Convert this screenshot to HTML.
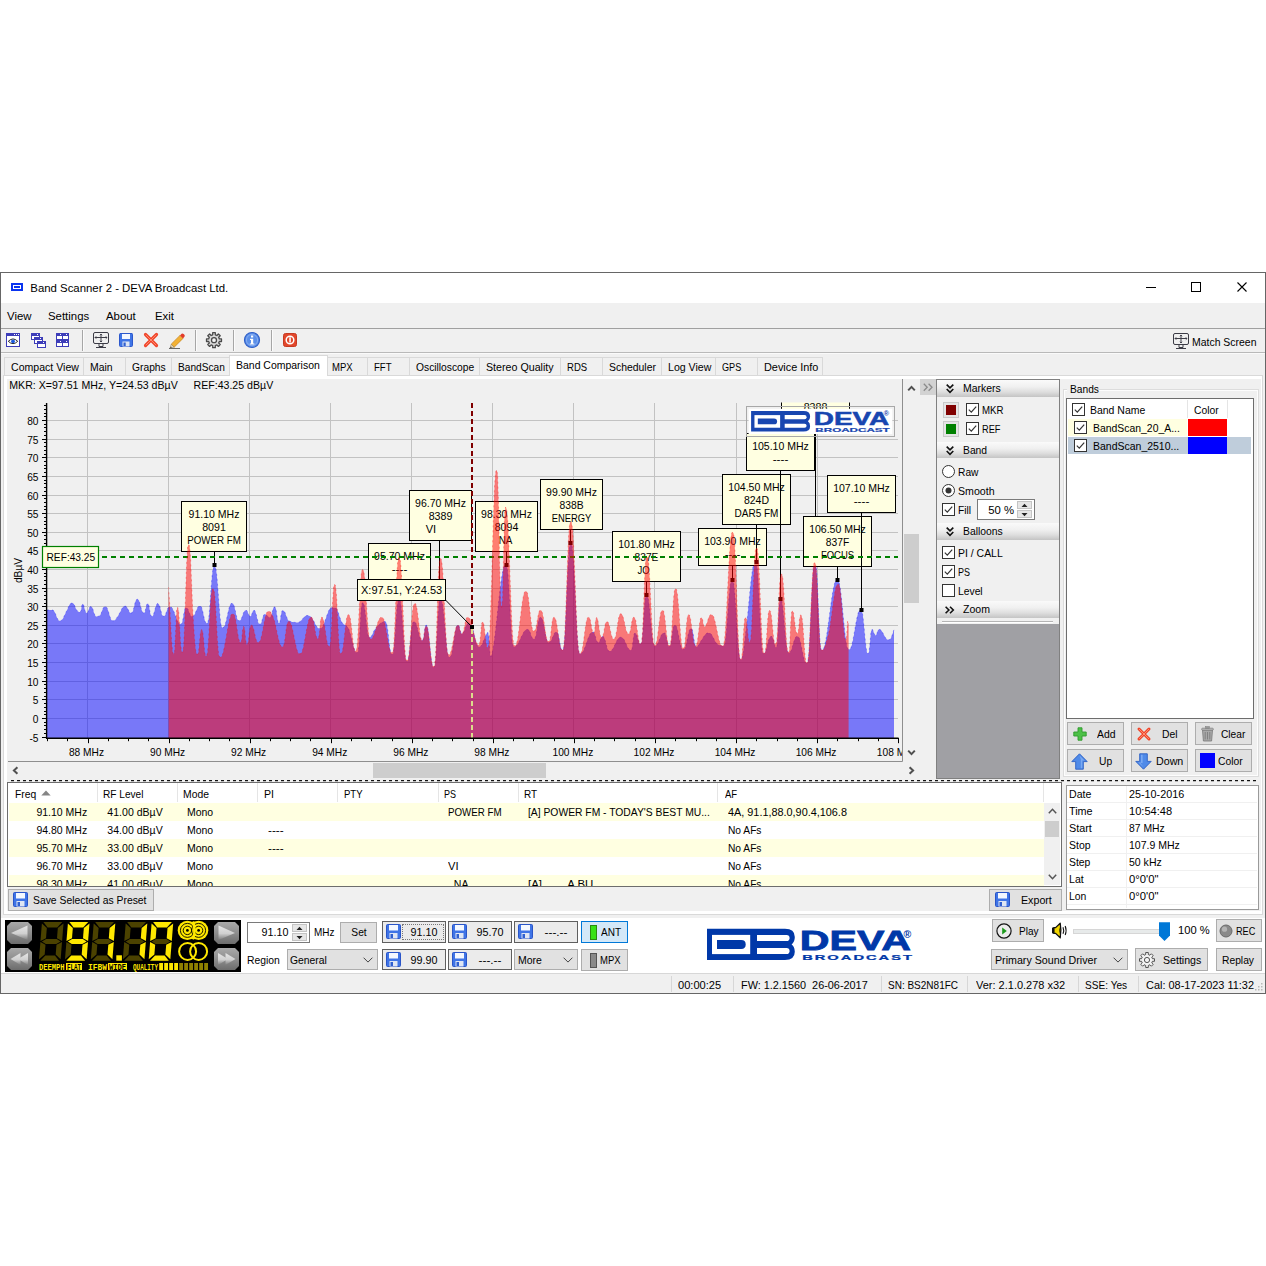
<!DOCTYPE html>
<html><head><meta charset="utf-8"><title>Band Scanner 2 - DEVA Broadcast Ltd.</title>
<style>
html,body{margin:0;padding:0;background:#fff;}
body{width:1266px;height:1266px;position:relative;overflow:hidden;font-family:"Liberation Sans",sans-serif;color:#000;}
body div{position:absolute;box-sizing:content-box;}
.t{white-space:nowrap;font-size:11px;line-height:14px;color:#000;}
svg{position:absolute;overflow:visible}
svg text{font-family:"Liberation Sans",sans-serif;}
.hdr{background:linear-gradient(#fafafa,#f0f0f0 40%,#dedede 70%,#c4c4c4);}
</style></head><body>

<div style="left:0px;top:272px;width:1264px;height:720px;border:1px solid #666;background:#f0f0f0"></div>
<div style="left:1px;top:273px;width:1264px;height:30px;background:#fff"></div>
<div style="left:11px;top:283px;width:12px;height:8px;background:#0a34f0"></div>
<div style="left:13px;top:285px;width:6px;height:2px;border:1px solid #fff;background:#0a34f0"></div>
<div class="t" style="left:30.3px;top:279.5px;font-size:11.4px;line-height:16px;letter-spacing:0">Band Scanner 2 - DEVA Broadcast Ltd.</div>
<svg style="left:1140px;top:277px" width="120" height="22" viewBox="1140 277 120 22"><path d="M1146 287.5H1156" stroke="#000" stroke-width="1"/><rect x="1191.5" y="282.5" width="9" height="9" fill="none" stroke="#000"/><path d="M1237.5 282.5L1246.5 291.5M1246.5 282.5L1237.5 291.5" stroke="#000" stroke-width="1.1"/></svg>
<div style="left:1px;top:303px;width:1264px;height:25px;background:#f0f0f0"></div>
<div class="t" style="left:7px;top:307.5px;font-size:11.4px;line-height:16px;letter-spacing:0">View</div>
<div class="t" style="left:48px;top:307.5px;font-size:11.4px;line-height:16px;letter-spacing:0">Settings</div>
<div class="t" style="left:106px;top:307.5px;font-size:11.4px;line-height:16px;letter-spacing:0">About</div>
<div class="t" style="left:155px;top:307.5px;font-size:11.4px;line-height:16px;letter-spacing:0">Exit</div>
<div style="left:1px;top:328px;width:1264px;height:1px;background:#a0a0a0"></div>
<div style="left:1px;top:352px;width:1264px;height:1px;background:#b9b9b9"></div>
<div style="left:1px;top:353px;width:1264px;height:1px;background:#fafafa"></div>
<div style="left:82px;top:330px;width:1px;height:21px;background:#a6a6a6"></div>
<div style="left:83px;top:330px;width:1px;height:21px;background:#fbfbfb"></div>
<div style="left:195px;top:330px;width:1px;height:21px;background:#a6a6a6"></div>
<div style="left:196px;top:330px;width:1px;height:21px;background:#fbfbfb"></div>
<div style="left:233px;top:330px;width:1px;height:21px;background:#a6a6a6"></div>
<div style="left:234px;top:330px;width:1px;height:21px;background:#fbfbfb"></div>
<div style="left:271px;top:330px;width:1px;height:21px;background:#a6a6a6"></div>
<div style="left:272px;top:330px;width:1px;height:21px;background:#fbfbfb"></div>
<svg style="left:0;top:328px" width="320" height="26" viewBox="0 328 320 26">
<rect x="6.5" y="333.5" width="13" height="13" fill="#fff" stroke="#3d3db9"/><rect x="6" y="333" width="14" height="3" fill="#3d3db9"/><rect x="14" y="334" width="1" height="1" fill="#fff"/><rect x="16" y="334" width="1" height="1" fill="#fff"/><rect x="18" y="334" width="1" height="1" fill="#fff"/>
<path d="M8.3 341.3 Q13 336.6 17.7 341.3 Q13 346 8.3 341.3Z" fill="#fff" stroke="#111" stroke-width="0.9"/><circle cx="13" cy="341.3" r="1.9" fill="#1d5be0"/>
<rect x="31.5" y="333.5" width="8" height="6" fill="#fff" stroke="#3d3db9"/><rect x="31" y="333" width="9" height="3" fill="#3d3db9"/><rect x="37" y="334" width="1" height="1" fill="#fff"/>
<rect x="34.5" y="337.5" width="8" height="6" fill="#fff" stroke="#3d3db9"/><rect x="34" y="337" width="9" height="3" fill="#3d3db9"/><rect x="40" y="338" width="1" height="1" fill="#fff"/>
<rect x="37.5" y="341.5" width="8" height="6" fill="#fff" stroke="#3d3db9"/><rect x="37" y="341" width="9" height="3" fill="#3d3db9"/><rect x="43" y="342" width="1" height="1" fill="#fff"/>
<rect x="56" y="333" width="13" height="14" fill="#3d3db9"/>
<rect x="57" y="336" width="5" height="3" fill="#fff"/>
<rect x="63" y="336" width="5" height="3" fill="#fff"/>
<rect x="57" y="343" width="5" height="3" fill="#fff"/>
<rect x="63" y="343" width="5" height="3" fill="#fff"/>
<rect x="60" y="334" width="1" height="1" fill="#fff"/><rect x="66" y="334" width="1" height="1" fill="#fff"/><rect x="60" y="341" width="1" height="1" fill="#fff"/><rect x="66" y="341" width="1" height="1" fill="#fff"/>
<g transform="translate(93,332)" fill="none" stroke="#3c3c46" stroke-width="1"><rect x="0.5" y="0.5" width="15" height="11" rx="1.5"/><path d="M8 2V10M2 5.5H14" /><path d="M6.8 3.2L8 2L9.2 3.2M6.8 8.8L8 10L9.2 8.8M3.2 4.3L2 5.5L3.2 6.7M12.8 4.3L14 5.5L12.8 6.7" stroke-width="0.9"/><path d="M6 12V14.5H10V12M3 15.5H13" /></g>
<path d="M120 333.5H132Q132.5 333.5 132.5 334.5V345.5Q132.5 346.5 131.5 346.5H120.5Q119.5 346.5 119.5 345.5V334.5Q119.5 333.5 120.5 333.5Z" fill="#3f74e6" stroke="#2c58cc"/><rect x="122" y="334" width="8" height="5" fill="#f3f7ff"/><rect x="122.5" y="341.5" width="7" height="5" fill="#dde5f4"/><rect x="123.5" y="342.5" width="2.2" height="3.5" fill="#2f5fd0"/>
<path d="M145.5 334.5L156.5 345.5M156.5 334.5L145.5 345.5" stroke="#f0452a" stroke-width="3.2" stroke-linecap="round"/><path d="M146 335L156 345M156 335L146 345" stroke="#ff8a6e" stroke-width="1" stroke-linecap="round"/>
<path d="M171.2 344.2L180 335.4L183 338.4L174.2 347.2Z" fill="#f2b134" stroke="#c4821c" stroke-width="0.7"/><path d="M180 335.4L181.6 333.8Q182.6 333 183.6 334L184.4 334.8Q185.2 335.8 184.4 336.8L183 338.4Z" fill="#e23c2a"/><path d="M171.2 344.2L170 348.2L174.2 347.2Z" fill="#e8d9b8" stroke="#8a7a5a" stroke-width="0.5"/><path d="M170 348.2L171 346.6L171.8 347.6Z" fill="#333"/><path d="M169 348.5H180" stroke="#666" stroke-width="1"/>
<path d="M221.49 338.89 L221.49 341.51 L219.35 341.48 L218.69 343.07 L220.22 344.57 L218.37 346.42 L216.87 344.89 L215.28 345.55 L215.31 347.69 L212.69 347.69 L212.72 345.55 L211.13 344.89 L209.63 346.42 L207.78 344.57 L209.31 343.07 L208.65 341.48 L206.51 341.51 L206.51 338.89 L208.65 338.92 L209.31 337.33 L207.78 335.83 L209.63 333.98 L211.13 335.51 L212.72 334.85 L212.69 332.71 L215.31 332.71 L215.28 334.85 L216.87 335.51 L218.37 333.98 L220.22 335.83 L218.69 337.33 L219.35 338.92Z" fill="#d9d9d9" stroke="#4a4a4a" stroke-width="1.3" stroke-linejoin="round"/><circle cx="214" cy="340.2" r="2.5" fill="#f4f4f4" stroke="#4a4a4a" stroke-width="1.3"/>
<circle cx="252" cy="340" r="7.5" fill="#5b8fe8" stroke="#2f5fc8" stroke-width="1.2"/><circle cx="252" cy="340" r="5.6" fill="none" stroke="#8fb4f4" stroke-width="0.8"/><rect x="251" y="335.5" width="2.2" height="2" fill="#fff"/><path d="M250 338.8H253.2V343.4H254.4V344.6H249.8V343.4H251V340H250Z" fill="#fff"/>
<rect x="283.5" y="333.5" width="13" height="13" rx="2" fill="#e2472b" stroke="#c63a22"/><circle cx="290" cy="340" r="3.8" fill="none" stroke="#fff" stroke-width="1.5"/><rect x="289.3" y="337.3" width="1.5" height="5.2" fill="#fff"/>
</svg>
<svg style="left:1170px;top:330px" width="20" height="20" viewBox="1170 330 20 20"><g transform="translate(1173,333)" fill="none" stroke="#3c3c46" stroke-width="1"><rect x="0.5" y="0.5" width="15" height="11" rx="1.5"/><path d="M8 2V10M2 5.5H14" /><path d="M6.8 3.2L8 2L9.2 3.2M6.8 8.8L8 10L9.2 8.8M3.2 4.3L2 5.5L3.2 6.7M12.8 4.3L14 5.5L12.8 6.7" stroke-width="0.9"/><path d="M6 12V14.5H10V12M3 15.5H13" /></g></svg>
<div class="t" style="left:1192px;top:334.5px;font-size:11px;line-height:14px;transform-origin:0 50%;transform:scaleX(0.950);">Match Screen</div>
<div style="left:3px;top:375px;width:1258px;height:538px;border:1px solid #d9d9d9;background:#fff"></div>
<div style="left:7px;top:379px;width:1254px;height:532.3px;background:#f0f0f0"></div>
<div style="left:4px;top:357px;width:78px;height:17px;border:1px solid #d9d9d9;border-bottom:none;background:#f0f0f0"></div>
<div class="t" style="left:10.5px;top:360.0px;font-size:11px;line-height:14px;transform-origin:0 50%;transform:scaleX(0.960);">Compact View</div>
<div style="left:83px;top:357px;width:41px;height:17px;border:1px solid #d9d9d9;border-bottom:none;background:#f0f0f0"></div>
<div class="t" style="left:89.5px;top:360.0px;font-size:11px;line-height:14px;transform-origin:0 50%;transform:scaleX(0.947);">Main</div>
<div style="left:125px;top:357px;width:45px;height:17px;border:1px solid #d9d9d9;border-bottom:none;background:#f0f0f0"></div>
<div class="t" style="left:131.5px;top:360.0px;font-size:11px;line-height:14px;transform-origin:0 50%;transform:scaleX(0.934);">Graphs</div>
<div style="left:171px;top:357px;width:57px;height:17px;border:1px solid #d9d9d9;border-bottom:none;background:#f0f0f0"></div>
<div class="t" style="left:177.5px;top:360.0px;font-size:11px;line-height:14px;transform-origin:0 50%;transform:scaleX(0.923);">BandScan</div>
<div style="left:327px;top:357px;width:39px;height:17px;border:1px solid #d9d9d9;border-bottom:none;background:#f0f0f0"></div>
<div class="t" style="left:331.6px;top:360.0px;font-size:11px;line-height:14px;transform-origin:0 50%;transform:scaleX(0.865);">MPX</div>
<div style="left:367px;top:357px;width:41px;height:17px;border:1px solid #d9d9d9;border-bottom:none;background:#f0f0f0"></div>
<div class="t" style="left:373.5px;top:360.0px;font-size:11px;line-height:14px;transform-origin:0 50%;transform:scaleX(0.874);">FFT</div>
<div style="left:409px;top:357px;width:69px;height:17px;border:1px solid #d9d9d9;border-bottom:none;background:#f0f0f0"></div>
<div class="t" style="left:415.5px;top:360.0px;font-size:11px;line-height:14px;transform-origin:0 50%;transform:scaleX(0.934);">Oscilloscope</div>
<div style="left:479px;top:357px;width:80px;height:17px;border:1px solid #d9d9d9;border-bottom:none;background:#f0f0f0"></div>
<div class="t" style="left:485.5px;top:360.0px;font-size:11px;line-height:14px;transform-origin:0 50%;transform:scaleX(0.970);">Stereo Quality</div>
<div style="left:560px;top:357px;width:41px;height:17px;border:1px solid #d9d9d9;border-bottom:none;background:#f0f0f0"></div>
<div class="t" style="left:566.5px;top:360.0px;font-size:11px;line-height:14px;transform-origin:0 50%;transform:scaleX(0.866);">RDS</div>
<div style="left:602px;top:357px;width:58px;height:17px;border:1px solid #d9d9d9;border-bottom:none;background:#f0f0f0"></div>
<div class="t" style="left:608.5px;top:360.0px;font-size:11px;line-height:14px;transform-origin:0 50%;transform:scaleX(0.947);">Scheduler</div>
<div style="left:661px;top:357px;width:53px;height:17px;border:1px solid #d9d9d9;border-bottom:none;background:#f0f0f0"></div>
<div class="t" style="left:667.5px;top:360.0px;font-size:11px;line-height:14px;transform-origin:0 50%;transform:scaleX(0.962);">Log View</div>
<div style="left:715px;top:357px;width:41px;height:17px;border:1px solid #d9d9d9;border-bottom:none;background:#f0f0f0"></div>
<div class="t" style="left:721.5px;top:360.0px;font-size:11px;line-height:14px;transform-origin:0 50%;transform:scaleX(0.828);">GPS</div>
<div style="left:757px;top:357px;width:64px;height:17px;border:1px solid #d9d9d9;border-bottom:none;background:#f0f0f0"></div>
<div class="t" style="left:763.5px;top:360.0px;font-size:11px;line-height:14px;transform-origin:0 50%;transform:scaleX(0.989);">Device Info</div>
<div style="left:229px;top:355px;width:97px;height:20px;border:1px solid #d9d9d9;border-bottom:none;background:#fff"></div>
<div style="left:230px;top:375px;width:97px;height:2px;background:#fff"></div>
<div class="t" style="left:236px;top:358.0px;font-size:11px;line-height:14px;transform-origin:0 50%;transform:scaleX(0.952);">Band Comparison</div>
<div class="t" style="left:9.3px;top:379.2px;font-size:10.6px;line-height:13.6px;letter-spacing:0">MKR: X=97.51 MHz, Y=24.53 dB&micro;V</div>
<div class="t" style="left:193.5px;top:379.2px;font-size:10.6px;line-height:13.6px;letter-spacing:0">REF:43.25 dB&micro;V</div>
<svg style="left:0;top:376px" width="936" height="406" viewBox="0 376 936 406">
<defs><clipPath id="plot"><rect x="40" y="402.5" width="862" height="336"/></clipPath></defs>
<path d="M47 718.5H898M47 699.5H898M47 681.5H898M47 662.5H898M47 643.5H898M47 625.5H898M47 606.5H898M47 588.5H898M47 569.5H898M47 550.5H898M47 532.5H898M47 513.5H898M47 495.5H898M47 476.5H898M47 457.5H898M47 439.5H898M47 420.5H898M87.5 403V738M168.5 403V738M249.5 403V738M330.5 403V738M411.5 403V738M492.5 403V738M573.5 403V738M654.5 403V738M736.5 403V738M817.5 403V738" stroke="#c2c2c2" stroke-width="1" fill="none"/>
<path d="M47.0 738.0 L47.0 610.0 L48.0 610.0 L49.0 610.0 L50.0 610.0 L51.0 610.0 L52.0 610.0 L53.0 610.1 L54.0 611.0 L55.0 612.8 L56.0 615.3 L57.0 617.8 L58.0 619.7 L59.0 620.7 L60.0 620.8 L61.0 620.7 L62.0 620.0 L63.0 618.5 L64.0 616.4 L65.0 614.3 L66.0 612.2 L67.0 610.2 L68.0 608.0 L69.0 605.8 L70.0 604.1 L71.0 603.3 L72.0 603.1 L73.0 603.2 L74.0 604.3 L75.0 606.5 L76.0 608.9 L77.0 610.4 L78.0 611.4 L79.0 611.9 L80.0 612.1 L81.0 610.9 L82.0 604.6 L83.0 603.8 L84.0 606.2 L85.0 610.7 L86.0 612.7 L87.0 612.9 L88.0 611.8 L89.0 608.7 L90.0 606.8 L91.0 606.6 L92.0 607.1 L93.0 609.5 L94.0 612.9 L95.0 615.6 L96.0 616.4 L97.0 616.5 L98.0 616.4 L99.0 616.1 L100.0 615.4 L101.0 613.8 L102.0 611.1 L103.0 608.5 L104.0 606.9 L105.0 606.6 L106.0 606.7 L107.0 607.7 L108.0 610.2 L109.0 613.5 L110.0 616.8 L111.0 619.4 L112.0 620.6 L113.0 620.8 L114.0 620.7 L115.0 620.1 L116.0 618.9 L117.0 617.4 L118.0 615.9 L119.0 614.3 L120.0 612.4 L121.0 610.4 L122.0 608.5 L123.0 607.1 L124.0 606.3 L125.0 606.2 L126.0 606.3 L127.0 607.3 L128.0 609.2 L129.0 611.3 L130.0 612.7 L131.0 613.0 L132.0 612.8 L133.0 611.1 L134.0 607.3 L135.0 603.0 L136.0 600.0 L137.0 599.3 L138.0 599.4 L139.0 600.6 L140.0 603.7 L141.0 607.7 L142.0 611.1 L143.0 612.8 L144.0 613.0 L145.0 612.0 L146.0 607.3 L147.0 603.9 L148.0 603.6 L149.0 605.6 L150.0 612.5 L151.0 616.0 L152.0 616.4 L153.0 615.7 L154.0 613.0 L155.0 609.3 L156.0 605.7 L157.0 603.8 L158.0 603.5 L159.0 604.4 L160.0 607.0 L161.0 611.1 L162.0 615.0 L163.0 616.2 L164.0 616.3 L165.0 615.6 L166.0 613.2 L167.0 610.2 L168.0 607.8 L169.0 606.9 L170.0 606.8 L171.0 607.0 L172.0 607.8 L173.0 609.5 L174.0 611.8 L175.0 614.5 L176.0 617.3 L177.0 619.9 L178.0 622.1 L179.0 623.5 L180.0 624.1 L181.0 624.2 L182.0 623.3 L183.0 618.9 L184.0 612.5 L185.0 608.4 L186.0 607.7 L187.0 607.9 L188.0 609.2 L189.0 611.7 L190.0 614.4 L191.0 616.1 L192.0 616.4 L193.0 616.3 L194.0 615.5 L195.0 613.7 L196.0 611.3 L197.0 608.9 L198.0 607.0 L199.0 606.1 L200.0 606.0 L201.0 606.3 L202.0 608.4 L203.0 612.5 L204.0 617.3 L205.0 621.2 L206.0 623.1 L207.0 623.3 L208.0 622.3 L209.0 616.0 L210.0 604.0 L211.0 589.6 L212.0 576.5 L213.0 568.2 L214.0 566.2 L215.0 566.3 L216.0 569.1 L217.0 577.6 L218.0 590.2 L219.0 604.2 L220.0 616.7 L221.0 624.9 L222.0 627.4 L223.0 627.6 L224.0 627.1 L225.0 625.0 L226.0 621.4 L227.0 617.0 L228.0 612.5 L229.0 608.3 L230.0 605.2 L231.0 603.6 L232.0 603.4 L233.0 603.6 L234.0 605.4 L235.0 609.3 L236.0 614.0 L237.0 618.2 L238.0 620.4 L239.0 620.7 L240.0 620.6 L241.0 619.4 L242.0 617.1 L243.0 614.2 L244.0 611.7 L245.0 610.5 L246.0 610.3 L247.0 610.7 L248.0 612.8 L249.0 615.5 L250.0 616.3 L251.0 616.0 L252.0 613.7 L253.0 610.8 L254.0 610.3 L255.0 610.8 L256.0 613.5 L257.0 617.8 L258.0 621.9 L259.0 623.9 L260.0 624.2 L261.0 623.7 L262.0 620.7 L263.0 616.6 L264.0 614.6 L265.0 614.3 L266.0 614.5 L267.0 615.5 L268.0 616.7 L269.0 617.3 L270.0 617.4 L271.0 616.7 L272.0 613.3 L273.0 609.0 L274.0 607.1 L275.0 607.0 L276.0 609.0 L277.0 616.2 L278.0 622.3 L279.0 623.3 L280.0 622.0 L281.0 614.9 L282.0 610.8 L283.0 610.4 L284.0 610.9 L285.0 612.6 L286.0 615.3 L287.0 618.0 L288.0 620.0 L289.0 620.9 L290.0 621.3 L291.0 621.6 L292.0 621.9 L293.0 622.1 L294.0 622.3 L295.0 622.4 L296.0 622.5 L297.0 622.5 L298.0 622.4 L299.0 622.2 L300.0 621.6 L301.0 620.7 L302.0 619.6 L303.0 618.4 L304.0 617.3 L305.0 616.3 L306.0 615.7 L307.0 615.5 L308.0 615.5 L309.0 615.7 L310.0 616.2 L311.0 617.1 L312.0 618.3 L313.0 619.8 L314.0 621.6 L315.0 623.6 L316.0 625.5 L317.0 627.0 L318.0 628.1 L319.0 628.5 L320.0 628.5 L321.0 628.4 L322.0 627.6 L323.0 626.0 L324.0 623.7 L325.0 620.9 L326.0 618.0 L327.0 615.1 L328.0 612.4 L329.0 610.1 L330.0 608.5 L331.0 607.8 L332.0 607.7 L333.0 607.7 L334.0 607.7 L335.0 607.7 L336.0 608.1 L337.0 609.5 L338.0 611.8 L339.0 614.7 L340.0 617.8 L341.0 620.6 L342.0 622.6 L343.0 623.8 L344.0 624.5 L345.0 625.0 L346.0 625.6 L347.0 626.3 L348.0 627.4 L349.0 629.6 L350.0 632.7 L351.0 636.6 L352.0 640.7 L353.0 644.7 L354.0 648.3 L355.0 651.0 L356.0 652.5 L357.0 652.8 L358.0 652.0 L359.0 645.1 L360.0 627.3 L361.0 609.8 L362.0 603.2 L363.0 602.6 L364.0 604.2 L365.0 610.2 L366.0 619.2 L367.0 628.5 L368.0 635.0 L369.0 637.0 L370.0 637.2 L371.0 636.8 L372.0 635.2 L373.0 633.0 L374.0 630.8 L375.0 629.2 L376.0 627.9 L377.0 626.8 L378.0 625.6 L379.0 624.6 L380.0 623.7 L381.0 622.9 L382.0 622.3 L383.0 621.8 L384.0 621.6 L385.0 621.6 L386.0 622.0 L387.0 625.1 L388.0 632.2 L389.0 641.3 L390.0 649.3 L391.0 653.8 L392.0 654.6 L393.0 653.9 L394.0 648.3 L395.0 636.0 L396.0 620.7 L397.0 607.4 L398.0 600.2 L399.0 599.0 L400.0 599.7 L401.0 604.8 L402.0 615.9 L403.0 630.5 L404.0 645.0 L405.0 656.0 L406.0 660.9 L407.0 661.5 L408.0 660.7 L409.0 655.4 L410.0 645.7 L411.0 634.7 L412.0 626.0 L413.0 622.1 L414.0 621.6 L415.0 621.9 L416.0 623.5 L417.0 626.5 L418.0 630.4 L419.0 634.4 L420.0 637.8 L421.0 640.0 L422.0 640.6 L423.0 640.1 L424.0 635.6 L425.0 626.8 L426.0 625.1 L427.0 625.6 L428.0 629.4 L429.0 637.2 L430.0 647.2 L431.0 656.9 L432.0 664.2 L433.0 667.3 L434.0 667.5 L435.0 665.5 L436.0 654.6 L437.0 636.0 L438.0 616.5 L439.0 603.0 L440.0 599.4 L441.0 599.2 L442.0 601.1 L443.0 607.4 L444.0 617.1 L445.0 628.7 L446.0 640.1 L447.0 649.7 L448.0 655.5 L449.0 657.1 L450.0 657.1 L451.0 656.0 L452.0 652.4 L453.0 646.6 L454.0 639.9 L455.0 633.4 L456.0 628.3 L457.0 625.6 L458.0 625.1 L459.0 625.8 L460.0 630.0 L461.0 633.3 L462.0 633.7 L463.0 633.3 L464.0 631.6 L465.0 628.9 L466.0 626.1 L467.0 624.1 L468.0 623.4 L469.0 623.4 L470.0 623.7 L471.0 625.1 L472.0 627.1 L473.0 629.9 L474.0 633.7 L475.0 638.0 L476.0 642.1 L477.0 645.1 L478.0 646.6 L479.0 646.8 L480.0 646.7 L481.0 646.0 L482.0 644.4 L483.0 642.1 L484.0 639.6 L485.0 637.0 L486.0 634.7 L487.0 633.0 L488.0 632.5 L489.0 637.0 L490.0 654.6 L491.0 656.8 L492.0 653.8 L493.0 648.8 L494.0 642.3 L495.0 634.6 L496.0 626.0 L497.0 616.9 L498.0 607.6 L499.0 598.4 L500.0 589.7 L501.0 581.8 L502.0 575.1 L503.0 569.8 L504.0 566.4 L505.0 565.0 L506.0 564.8 L507.0 566.0 L508.0 573.9 L509.0 589.4 L510.0 608.7 L511.0 627.4 L512.0 640.9 L513.0 646.1 L514.0 646.8 L515.0 646.7 L516.0 646.1 L517.0 645.0 L518.0 643.5 L519.0 641.7 L520.0 639.6 L521.0 637.5 L522.0 635.4 L523.0 633.5 L524.0 631.8 L525.0 630.5 L526.0 629.7 L527.0 629.4 L528.0 629.5 L529.0 629.9 L530.0 631.9 L531.0 634.9 L532.0 637.5 L533.0 638.8 L534.0 639.0 L535.0 638.4 L536.0 635.2 L537.0 629.4 L538.0 623.2 L539.0 618.7 L540.0 617.4 L541.0 617.3 L542.0 618.3 L543.0 621.5 L544.0 626.5 L545.0 632.2 L546.0 637.5 L547.0 641.0 L548.0 642.3 L549.0 642.4 L550.0 642.1 L551.0 640.8 L552.0 638.7 L553.0 636.2 L554.0 633.9 L555.0 632.5 L556.0 632.1 L557.0 632.2 L558.0 633.6 L559.0 638.0 L560.0 643.9 L561.0 648.5 L562.0 650.1 L563.0 650.0 L564.0 646.6 L565.0 633.5 L566.0 612.5 L567.0 588.1 L568.0 565.5 L569.0 549.6 L570.0 543.6 L571.0 543.0 L572.0 544.8 L573.0 553.8 L574.0 570.1 L575.0 590.8 L576.0 612.6 L577.0 632.2 L578.0 646.5 L579.0 652.9 L580.0 653.7 L581.0 653.6 L582.0 653.0 L583.0 651.6 L584.0 649.5 L585.0 647.0 L586.0 644.2 L587.0 641.3 L588.0 638.6 L589.0 636.1 L590.0 634.1 L591.0 632.7 L592.0 632.1 L593.0 632.0 L594.0 632.4 L595.0 634.9 L596.0 638.9 L597.0 641.8 L598.0 642.4 L599.0 642.2 L600.0 640.5 L601.0 637.7 L602.0 636.5 L603.0 636.4 L604.0 637.2 L605.0 639.8 L606.0 643.7 L607.0 647.6 L608.0 650.3 L609.0 651.1 L610.0 651.1 L611.0 650.9 L612.0 650.0 L613.0 648.5 L614.0 646.6 L615.0 644.5 L616.0 642.3 L617.0 640.4 L618.0 638.7 L619.0 637.7 L620.0 637.3 L621.0 637.2 L622.0 637.4 L623.0 638.2 L624.0 639.6 L625.0 641.6 L626.0 643.8 L627.0 646.0 L628.0 647.9 L629.0 649.4 L630.0 650.1 L631.0 650.3 L632.0 648.9 L633.0 641.0 L634.0 634.0 L635.0 632.9 L636.0 633.5 L637.0 636.0 L638.0 639.6 L639.0 642.7 L640.0 644.0 L641.0 644.0 L642.0 641.6 L643.0 630.1 L644.0 613.1 L645.0 599.4 L646.0 595.1 L647.0 594.9 L648.0 596.7 L649.0 603.3 L650.0 613.5 L651.0 625.2 L652.0 635.8 L653.0 643.1 L654.0 645.6 L655.0 645.9 L656.0 645.7 L657.0 644.6 L658.0 642.8 L659.0 640.5 L660.0 638.0 L661.0 635.8 L662.0 634.0 L663.0 633.1 L664.0 632.9 L665.0 633.2 L666.0 635.7 L667.0 640.8 L668.0 645.3 L669.0 646.7 L670.0 646.5 L671.0 643.8 L672.0 636.3 L673.0 628.6 L674.0 625.5 L675.0 625.1 L676.0 625.7 L677.0 628.1 L678.0 632.3 L679.0 637.3 L680.0 642.3 L681.0 646.4 L682.0 648.8 L683.0 649.4 L684.0 649.3 L685.0 648.1 L686.0 644.9 L687.0 640.2 L688.0 635.3 L689.0 631.2 L690.0 629.0 L691.0 628.6 L692.0 629.0 L693.0 632.6 L694.0 639.4 L695.0 645.1 L696.0 646.7 L697.0 646.7 L698.0 646.0 L699.0 644.3 L700.0 642.5 L701.0 640.9 L702.0 639.3 L703.0 637.7 L704.0 636.2 L705.0 634.8 L706.0 633.8 L707.0 633.1 L708.0 632.9 L709.0 632.9 L710.0 633.1 L711.0 633.9 L712.0 635.3 L713.0 637.1 L714.0 639.1 L715.0 641.0 L716.0 642.7 L717.0 643.8 L718.0 644.5 L719.0 645.0 L720.0 645.4 L721.0 645.7 L722.0 645.9 L723.0 645.9 L724.0 645.7 L725.0 643.4 L726.0 635.8 L727.0 624.0 L728.0 610.1 L729.0 596.8 L730.0 586.4 L731.0 580.9 L732.0 579.9 L733.0 580.5 L734.0 585.1 L735.0 596.2 L736.0 611.6 L737.0 628.5 L738.0 643.8 L739.0 654.8 L740.0 659.3 L741.0 659.8 L742.0 659.0 L743.0 654.6 L744.0 646.9 L745.0 638.1 L746.0 630.0 L747.0 621.1 L748.0 611.2 L749.0 600.9 L750.0 590.6 L751.0 581.1 L752.0 572.9 L753.0 566.7 L754.0 562.9 L755.0 561.8 L756.0 561.9 L757.0 564.9 L758.0 577.0 L759.0 596.4 L760.0 618.4 L761.0 638.0 L762.0 650.3 L763.0 653.5 L764.0 653.7 L765.0 652.8 L766.0 650.3 L767.0 646.4 L768.0 642.3 L769.0 638.8 L770.0 636.8 L771.0 636.4 L772.0 636.6 L773.0 638.5 L774.0 642.7 L775.0 646.4 L776.0 647.5 L777.0 646.0 L778.0 633.0 L779.0 607.1 L780.0 599.3 L781.0 599.0 L782.0 601.8 L783.0 609.4 L784.0 620.4 L785.0 632.4 L786.0 643.1 L787.0 650.3 L788.0 652.6 L789.0 652.8 L790.0 652.4 L791.0 650.7 L792.0 647.9 L793.0 644.5 L794.0 641.1 L795.0 638.3 L796.0 636.7 L797.0 636.4 L798.0 636.5 L799.0 637.4 L800.0 640.2 L801.0 644.4 L802.0 649.4 L803.0 654.4 L804.0 658.8 L805.0 661.9 L806.0 663.1 L807.0 663.2 L808.0 661.6 L809.0 652.1 L810.0 634.1 L811.0 611.7 L812.0 589.5 L813.0 572.3 L814.0 563.8 L815.0 562.6 L816.0 564.1 L817.0 575.4 L818.0 597.8 L819.0 623.3 L820.0 642.6 L821.0 649.5 L822.0 650.2 L823.0 649.8 L824.0 647.8 L825.0 644.2 L826.0 639.1 L827.0 632.9 L828.0 625.9 L829.0 618.5 L830.0 610.9 L831.0 603.5 L832.0 596.6 L833.0 590.6 L834.0 585.6 L835.0 582.1 L836.0 580.3 L837.0 579.9 L838.0 580.1 L839.0 581.8 L840.0 586.6 L841.0 594.1 L842.0 603.4 L843.0 613.7 L844.0 624.0 L845.0 633.6 L846.0 641.5 L847.0 646.9 L848.0 649.1 L849.0 649.4 L850.0 649.2 L851.0 647.6 L852.0 644.4 L853.0 639.8 L854.0 634.4 L855.0 628.5 L856.0 622.8 L857.0 617.6 L858.0 613.5 L859.0 610.8 L860.0 609.9 L861.0 609.9 L862.0 611.1 L863.0 616.8 L864.0 626.6 L865.0 637.7 L866.0 647.2 L867.0 652.7 L868.0 653.7 L869.0 652.3 L870.0 643.1 L871.0 631.6 L872.0 629.5 L873.0 630.0 L874.0 633.4 L875.0 635.2 L876.0 635.2 L877.0 633.4 L878.0 630.0 L879.0 629.4 L880.0 629.5 L881.0 630.1 L882.0 631.4 L883.0 633.2 L884.0 635.1 L885.0 637.0 L886.0 638.6 L887.0 639.5 L888.0 639.8 L889.0 639.8 L890.0 639.4 L891.0 638.1 L892.0 635.6 L893.0 632.4 L894.0 629.8 L894.0 738.0 Z" fill="rgba(0,0,255,0.5)"/>
<path d="M47.0 610.0 L48.0 610.0 L49.0 610.0 L50.0 610.0 L51.0 610.0 L52.0 610.0 L53.0 610.1 L54.0 611.0 L55.0 612.8 L56.0 615.3 L57.0 617.8 L58.0 619.7 L59.0 620.7 L60.0 620.8 L61.0 620.7 L62.0 620.0 L63.0 618.5 L64.0 616.4 L65.0 614.3 L66.0 612.2 L67.0 610.2 L68.0 608.0 L69.0 605.8 L70.0 604.1 L71.0 603.3 L72.0 603.1 L73.0 603.2 L74.0 604.3 L75.0 606.5 L76.0 608.9 L77.0 610.4 L78.0 611.4 L79.0 611.9 L80.0 612.1 L81.0 610.9 L82.0 604.6 L83.0 603.8 L84.0 606.2 L85.0 610.7 L86.0 612.7 L87.0 612.9 L88.0 611.8 L89.0 608.7 L90.0 606.8 L91.0 606.6 L92.0 607.1 L93.0 609.5 L94.0 612.9 L95.0 615.6 L96.0 616.4 L97.0 616.5 L98.0 616.4 L99.0 616.1 L100.0 615.4 L101.0 613.8 L102.0 611.1 L103.0 608.5 L104.0 606.9 L105.0 606.6 L106.0 606.7 L107.0 607.7 L108.0 610.2 L109.0 613.5 L110.0 616.8 L111.0 619.4 L112.0 620.6 L113.0 620.8 L114.0 620.7 L115.0 620.1 L116.0 618.9 L117.0 617.4 L118.0 615.9 L119.0 614.3 L120.0 612.4 L121.0 610.4 L122.0 608.5 L123.0 607.1 L124.0 606.3 L125.0 606.2 L126.0 606.3 L127.0 607.3 L128.0 609.2 L129.0 611.3 L130.0 612.7 L131.0 613.0 L132.0 612.8 L133.0 611.1 L134.0 607.3 L135.0 603.0 L136.0 600.0 L137.0 599.3 L138.0 599.4 L139.0 600.6 L140.0 603.7 L141.0 607.7 L142.0 611.1 L143.0 612.8 L144.0 613.0 L145.0 612.0 L146.0 607.3 L147.0 603.9 L148.0 603.6 L149.0 605.6 L150.0 612.5 L151.0 616.0 L152.0 616.4 L153.0 615.7 L154.0 613.0 L155.0 609.3 L156.0 605.7 L157.0 603.8 L158.0 603.5 L159.0 604.4 L160.0 607.0 L161.0 611.1 L162.0 615.0 L163.0 616.2 L164.0 616.3 L165.0 615.6 L166.0 613.2 L167.0 610.2 L168.0 607.8 L169.0 606.9 L170.0 606.8 L171.0 607.0 L172.0 607.8 L173.0 609.5 L174.0 611.8 L175.0 614.5 L176.0 617.3 L177.0 619.9 L178.0 622.1 L179.0 623.5 L180.0 624.1 L181.0 624.2 L182.0 623.3 L183.0 618.9 L184.0 612.5 L185.0 608.4 L186.0 607.7 L187.0 607.9 L188.0 609.2 L189.0 611.7 L190.0 614.4 L191.0 616.1 L192.0 616.4 L193.0 616.3 L194.0 615.5 L195.0 613.7 L196.0 611.3 L197.0 608.9 L198.0 607.0 L199.0 606.1 L200.0 606.0 L201.0 606.3 L202.0 608.4 L203.0 612.5 L204.0 617.3 L205.0 621.2 L206.0 623.1 L207.0 623.3 L208.0 622.3 L209.0 616.0 L210.0 604.0 L211.0 589.6 L212.0 576.5 L213.0 568.2 L214.0 566.2 L215.0 566.3 L216.0 569.1 L217.0 577.6 L218.0 590.2 L219.0 604.2 L220.0 616.7 L221.0 624.9 L222.0 627.4 L223.0 627.6 L224.0 627.1 L225.0 625.0 L226.0 621.4 L227.0 617.0 L228.0 612.5 L229.0 608.3 L230.0 605.2 L231.0 603.6 L232.0 603.4 L233.0 603.6 L234.0 605.4 L235.0 609.3 L236.0 614.0 L237.0 618.2 L238.0 620.4 L239.0 620.7 L240.0 620.6 L241.0 619.4 L242.0 617.1 L243.0 614.2 L244.0 611.7 L245.0 610.5 L246.0 610.3 L247.0 610.7 L248.0 612.8 L249.0 615.5 L250.0 616.3 L251.0 616.0 L252.0 613.7 L253.0 610.8 L254.0 610.3 L255.0 610.8 L256.0 613.5 L257.0 617.8 L258.0 621.9 L259.0 623.9 L260.0 624.2 L261.0 623.7 L262.0 620.7 L263.0 616.6 L264.0 614.6 L265.0 614.3 L266.0 614.5 L267.0 615.5 L268.0 616.7 L269.0 617.3 L270.0 617.4 L271.0 616.7 L272.0 613.3 L273.0 609.0 L274.0 607.1 L275.0 607.0 L276.0 609.0 L277.0 616.2 L278.0 622.3 L279.0 623.3 L280.0 622.0 L281.0 614.9 L282.0 610.8 L283.0 610.4 L284.0 610.9 L285.0 612.6 L286.0 615.3 L287.0 618.0 L288.0 620.0 L289.0 620.9 L290.0 621.3 L291.0 621.6 L292.0 621.9 L293.0 622.1 L294.0 622.3 L295.0 622.4 L296.0 622.5 L297.0 622.5 L298.0 622.4 L299.0 622.2 L300.0 621.6 L301.0 620.7 L302.0 619.6 L303.0 618.4 L304.0 617.3 L305.0 616.3 L306.0 615.7 L307.0 615.5 L308.0 615.5 L309.0 615.7 L310.0 616.2 L311.0 617.1 L312.0 618.3 L313.0 619.8 L314.0 621.6 L315.0 623.6 L316.0 625.5 L317.0 627.0 L318.0 628.1 L319.0 628.5 L320.0 628.5 L321.0 628.4 L322.0 627.6 L323.0 626.0 L324.0 623.7 L325.0 620.9 L326.0 618.0 L327.0 615.1 L328.0 612.4 L329.0 610.1 L330.0 608.5 L331.0 607.8 L332.0 607.7 L333.0 607.7 L334.0 607.7 L335.0 607.7 L336.0 608.1 L337.0 609.5 L338.0 611.8 L339.0 614.7 L340.0 617.8 L341.0 620.6 L342.0 622.6 L343.0 623.8 L344.0 624.5 L345.0 625.0 L346.0 625.6 L347.0 626.3 L348.0 627.4 L349.0 629.6 L350.0 632.7 L351.0 636.6 L352.0 640.7 L353.0 644.7 L354.0 648.3 L355.0 651.0 L356.0 652.5 L357.0 652.8 L358.0 652.0 L359.0 645.1 L360.0 627.3 L361.0 609.8 L362.0 603.2 L363.0 602.6 L364.0 604.2 L365.0 610.2 L366.0 619.2 L367.0 628.5 L368.0 635.0 L369.0 637.0 L370.0 637.2 L371.0 636.8 L372.0 635.2 L373.0 633.0 L374.0 630.8 L375.0 629.2 L376.0 627.9 L377.0 626.8 L378.0 625.6 L379.0 624.6 L380.0 623.7 L381.0 622.9 L382.0 622.3 L383.0 621.8 L384.0 621.6 L385.0 621.6 L386.0 622.0 L387.0 625.1 L388.0 632.2 L389.0 641.3 L390.0 649.3 L391.0 653.8 L392.0 654.6 L393.0 653.9 L394.0 648.3 L395.0 636.0 L396.0 620.7 L397.0 607.4 L398.0 600.2 L399.0 599.0 L400.0 599.7 L401.0 604.8 L402.0 615.9 L403.0 630.5 L404.0 645.0 L405.0 656.0 L406.0 660.9 L407.0 661.5 L408.0 660.7 L409.0 655.4 L410.0 645.7 L411.0 634.7 L412.0 626.0 L413.0 622.1 L414.0 621.6 L415.0 621.9 L416.0 623.5 L417.0 626.5 L418.0 630.4 L419.0 634.4 L420.0 637.8 L421.0 640.0 L422.0 640.6 L423.0 640.1 L424.0 635.6 L425.0 626.8 L426.0 625.1 L427.0 625.6 L428.0 629.4 L429.0 637.2 L430.0 647.2 L431.0 656.9 L432.0 664.2 L433.0 667.3 L434.0 667.5 L435.0 665.5 L436.0 654.6 L437.0 636.0 L438.0 616.5 L439.0 603.0 L440.0 599.4 L441.0 599.2 L442.0 601.1 L443.0 607.4 L444.0 617.1 L445.0 628.7 L446.0 640.1 L447.0 649.7 L448.0 655.5 L449.0 657.1 L450.0 657.1 L451.0 656.0 L452.0 652.4 L453.0 646.6 L454.0 639.9 L455.0 633.4 L456.0 628.3 L457.0 625.6 L458.0 625.1 L459.0 625.8 L460.0 630.0 L461.0 633.3 L462.0 633.7 L463.0 633.3 L464.0 631.6 L465.0 628.9 L466.0 626.1 L467.0 624.1 L468.0 623.4 L469.0 623.4 L470.0 623.7 L471.0 625.1 L472.0 627.1 L473.0 629.9 L474.0 633.7 L475.0 638.0 L476.0 642.1 L477.0 645.1 L478.0 646.6 L479.0 646.8 L480.0 646.7 L481.0 646.0 L482.0 644.4 L483.0 642.1 L484.0 639.6 L485.0 637.0 L486.0 634.7 L487.0 633.0 L488.0 632.5 L489.0 637.0 L490.0 654.6 L491.0 656.8 L492.0 653.8 L493.0 648.8 L494.0 642.3 L495.0 634.6 L496.0 626.0 L497.0 616.9 L498.0 607.6 L499.0 598.4 L500.0 589.7 L501.0 581.8 L502.0 575.1 L503.0 569.8 L504.0 566.4 L505.0 565.0 L506.0 564.8 L507.0 566.0 L508.0 573.9 L509.0 589.4 L510.0 608.7 L511.0 627.4 L512.0 640.9 L513.0 646.1 L514.0 646.8 L515.0 646.7 L516.0 646.1 L517.0 645.0 L518.0 643.5 L519.0 641.7 L520.0 639.6 L521.0 637.5 L522.0 635.4 L523.0 633.5 L524.0 631.8 L525.0 630.5 L526.0 629.7 L527.0 629.4 L528.0 629.5 L529.0 629.9 L530.0 631.9 L531.0 634.9 L532.0 637.5 L533.0 638.8 L534.0 639.0 L535.0 638.4 L536.0 635.2 L537.0 629.4 L538.0 623.2 L539.0 618.7 L540.0 617.4 L541.0 617.3 L542.0 618.3 L543.0 621.5 L544.0 626.5 L545.0 632.2 L546.0 637.5 L547.0 641.0 L548.0 642.3 L549.0 642.4 L550.0 642.1 L551.0 640.8 L552.0 638.7 L553.0 636.2 L554.0 633.9 L555.0 632.5 L556.0 632.1 L557.0 632.2 L558.0 633.6 L559.0 638.0 L560.0 643.9 L561.0 648.5 L562.0 650.1 L563.0 650.0 L564.0 646.6 L565.0 633.5 L566.0 612.5 L567.0 588.1 L568.0 565.5 L569.0 549.6 L570.0 543.6 L571.0 543.0 L572.0 544.8 L573.0 553.8 L574.0 570.1 L575.0 590.8 L576.0 612.6 L577.0 632.2 L578.0 646.5 L579.0 652.9 L580.0 653.7 L581.0 653.6 L582.0 653.0 L583.0 651.6 L584.0 649.5 L585.0 647.0 L586.0 644.2 L587.0 641.3 L588.0 638.6 L589.0 636.1 L590.0 634.1 L591.0 632.7 L592.0 632.1 L593.0 632.0 L594.0 632.4 L595.0 634.9 L596.0 638.9 L597.0 641.8 L598.0 642.4 L599.0 642.2 L600.0 640.5 L601.0 637.7 L602.0 636.5 L603.0 636.4 L604.0 637.2 L605.0 639.8 L606.0 643.7 L607.0 647.6 L608.0 650.3 L609.0 651.1 L610.0 651.1 L611.0 650.9 L612.0 650.0 L613.0 648.5 L614.0 646.6 L615.0 644.5 L616.0 642.3 L617.0 640.4 L618.0 638.7 L619.0 637.7 L620.0 637.3 L621.0 637.2 L622.0 637.4 L623.0 638.2 L624.0 639.6 L625.0 641.6 L626.0 643.8 L627.0 646.0 L628.0 647.9 L629.0 649.4 L630.0 650.1 L631.0 650.3 L632.0 648.9 L633.0 641.0 L634.0 634.0 L635.0 632.9 L636.0 633.5 L637.0 636.0 L638.0 639.6 L639.0 642.7 L640.0 644.0 L641.0 644.0 L642.0 641.6 L643.0 630.1 L644.0 613.1 L645.0 599.4 L646.0 595.1 L647.0 594.9 L648.0 596.7 L649.0 603.3 L650.0 613.5 L651.0 625.2 L652.0 635.8 L653.0 643.1 L654.0 645.6 L655.0 645.9 L656.0 645.7 L657.0 644.6 L658.0 642.8 L659.0 640.5 L660.0 638.0 L661.0 635.8 L662.0 634.0 L663.0 633.1 L664.0 632.9 L665.0 633.2 L666.0 635.7 L667.0 640.8 L668.0 645.3 L669.0 646.7 L670.0 646.5 L671.0 643.8 L672.0 636.3 L673.0 628.6 L674.0 625.5 L675.0 625.1 L676.0 625.7 L677.0 628.1 L678.0 632.3 L679.0 637.3 L680.0 642.3 L681.0 646.4 L682.0 648.8 L683.0 649.4 L684.0 649.3 L685.0 648.1 L686.0 644.9 L687.0 640.2 L688.0 635.3 L689.0 631.2 L690.0 629.0 L691.0 628.6 L692.0 629.0 L693.0 632.6 L694.0 639.4 L695.0 645.1 L696.0 646.7 L697.0 646.7 L698.0 646.0 L699.0 644.3 L700.0 642.5 L701.0 640.9 L702.0 639.3 L703.0 637.7 L704.0 636.2 L705.0 634.8 L706.0 633.8 L707.0 633.1 L708.0 632.9 L709.0 632.9 L710.0 633.1 L711.0 633.9 L712.0 635.3 L713.0 637.1 L714.0 639.1 L715.0 641.0 L716.0 642.7 L717.0 643.8 L718.0 644.5 L719.0 645.0 L720.0 645.4 L721.0 645.7 L722.0 645.9 L723.0 645.9 L724.0 645.7 L725.0 643.4 L726.0 635.8 L727.0 624.0 L728.0 610.1 L729.0 596.8 L730.0 586.4 L731.0 580.9 L732.0 579.9 L733.0 580.5 L734.0 585.1 L735.0 596.2 L736.0 611.6 L737.0 628.5 L738.0 643.8 L739.0 654.8 L740.0 659.3 L741.0 659.8 L742.0 659.0 L743.0 654.6 L744.0 646.9 L745.0 638.1 L746.0 630.0 L747.0 621.1 L748.0 611.2 L749.0 600.9 L750.0 590.6 L751.0 581.1 L752.0 572.9 L753.0 566.7 L754.0 562.9 L755.0 561.8 L756.0 561.9 L757.0 564.9 L758.0 577.0 L759.0 596.4 L760.0 618.4 L761.0 638.0 L762.0 650.3 L763.0 653.5 L764.0 653.7 L765.0 652.8 L766.0 650.3 L767.0 646.4 L768.0 642.3 L769.0 638.8 L770.0 636.8 L771.0 636.4 L772.0 636.6 L773.0 638.5 L774.0 642.7 L775.0 646.4 L776.0 647.5 L777.0 646.0 L778.0 633.0 L779.0 607.1 L780.0 599.3 L781.0 599.0 L782.0 601.8 L783.0 609.4 L784.0 620.4 L785.0 632.4 L786.0 643.1 L787.0 650.3 L788.0 652.6 L789.0 652.8 L790.0 652.4 L791.0 650.7 L792.0 647.9 L793.0 644.5 L794.0 641.1 L795.0 638.3 L796.0 636.7 L797.0 636.4 L798.0 636.5 L799.0 637.4 L800.0 640.2 L801.0 644.4 L802.0 649.4 L803.0 654.4 L804.0 658.8 L805.0 661.9 L806.0 663.1 L807.0 663.2 L808.0 661.6 L809.0 652.1 L810.0 634.1 L811.0 611.7 L812.0 589.5 L813.0 572.3 L814.0 563.8 L815.0 562.6 L816.0 564.1 L817.0 575.4 L818.0 597.8 L819.0 623.3 L820.0 642.6 L821.0 649.5 L822.0 650.2 L823.0 649.8 L824.0 647.8 L825.0 644.2 L826.0 639.1 L827.0 632.9 L828.0 625.9 L829.0 618.5 L830.0 610.9 L831.0 603.5 L832.0 596.6 L833.0 590.6 L834.0 585.6 L835.0 582.1 L836.0 580.3 L837.0 579.9 L838.0 580.1 L839.0 581.8 L840.0 586.6 L841.0 594.1 L842.0 603.4 L843.0 613.7 L844.0 624.0 L845.0 633.6 L846.0 641.5 L847.0 646.9 L848.0 649.1 L849.0 649.4 L850.0 649.2 L851.0 647.6 L852.0 644.4 L853.0 639.8 L854.0 634.4 L855.0 628.5 L856.0 622.8 L857.0 617.6 L858.0 613.5 L859.0 610.8 L860.0 609.9 L861.0 609.9 L862.0 611.1 L863.0 616.8 L864.0 626.6 L865.0 637.7 L866.0 647.2 L867.0 652.7 L868.0 653.7 L869.0 652.3 L870.0 643.1 L871.0 631.6 L872.0 629.5 L873.0 630.0 L874.0 633.4 L875.0 635.2 L876.0 635.2 L877.0 633.4 L878.0 630.0 L879.0 629.4 L880.0 629.5 L881.0 630.1 L882.0 631.4 L883.0 633.2 L884.0 635.1 L885.0 637.0 L886.0 638.6 L887.0 639.5 L888.0 639.8 L889.0 639.8 L890.0 639.4 L891.0 638.1 L892.0 635.6 L893.0 632.4 L894.0 629.8" fill="none" stroke="rgba(0,0,255,0.55)" stroke-width="0.6" stroke-dasharray="2 3"/>
<g clip-path="url(#plot)">
<path d="M214.5 551V565" stroke="#000" stroke-width="1"/><rect x="212.5" y="563" width="4" height="4" fill="#000"/><rect x="181.5" y="501.5" width="65" height="50" fill="#ffffe1" stroke="#000" stroke-width="1"/><text x="214.0" y="517.8" font-size="11" text-anchor="middle" textLength="50.8" lengthAdjust="spacingAndGlyphs">91.10 MHz</text><text x="214.0" y="530.8" font-size="11" text-anchor="middle" textLength="23.7" lengthAdjust="spacingAndGlyphs">8091</text><text x="214.0" y="543.8" font-size="11" text-anchor="middle" textLength="53.6" lengthAdjust="spacingAndGlyphs">POWER FM</text>
<path d="M399.5 593V580" stroke="#000" stroke-width="1"/><rect x="397.5" y="578" width="4" height="4" fill="#000"/><rect x="368.5" y="543.5" width="62" height="50" fill="#ffffe1" stroke="#000" stroke-width="1"/><text x="399.5" y="559.8" font-size="11" text-anchor="middle" textLength="50.8" lengthAdjust="spacingAndGlyphs">95.70 MHz</text><text x="399.5" y="572.8" font-size="11" text-anchor="middle" textLength="15.7" lengthAdjust="spacingAndGlyphs">----</text>
<path d="M439.5 540V596" stroke="#000" stroke-width="1"/><rect x="437.5" y="594" width="4" height="4" fill="#000"/><rect x="409.5" y="490.5" width="62" height="50" fill="#ffffe1" stroke="#000" stroke-width="1"/><text x="440.5" y="506.8" font-size="11" text-anchor="middle" textLength="50.8" lengthAdjust="spacingAndGlyphs">96.70 MHz</text><text x="440.5" y="519.8" font-size="11" text-anchor="middle" textLength="23.7" lengthAdjust="spacingAndGlyphs">8389</text><text x="430.9" y="532.8" font-size="11" text-anchor="middle" textLength="10.5" lengthAdjust="spacingAndGlyphs">VI</text>
<path d="M506.5 551V565" stroke="#000" stroke-width="1"/><rect x="504.5" y="563" width="4" height="4" fill="#000"/><rect x="475.5" y="501.5" width="62" height="50" fill="#ffffe1" stroke="#000" stroke-width="1"/><text x="506.5" y="517.8" font-size="11" text-anchor="middle" textLength="50.8" lengthAdjust="spacingAndGlyphs">98.30 MHz</text><text x="506.5" y="530.8" font-size="11" text-anchor="middle" textLength="23.7" lengthAdjust="spacingAndGlyphs">8094</text><text x="505.5" y="543.8" font-size="11" text-anchor="middle" textLength="13.7" lengthAdjust="spacingAndGlyphs">NA</text>
<path d="M570.5 529V543" stroke="#000" stroke-width="1"/><rect x="568.5" y="541" width="4" height="4" fill="#000"/><rect x="540.5" y="479.5" width="62" height="50" fill="#ffffe1" stroke="#000" stroke-width="1"/><text x="571.5" y="495.8" font-size="11" text-anchor="middle" textLength="50.8" lengthAdjust="spacingAndGlyphs">99.90 MHz</text><text x="571.5" y="508.8" font-size="11" text-anchor="middle" textLength="24.1" lengthAdjust="spacingAndGlyphs">838B</text><text x="571.5" y="521.8" font-size="11" text-anchor="middle" textLength="39.6" lengthAdjust="spacingAndGlyphs">ENERGY</text>
<path d="M646.5 581V595" stroke="#000" stroke-width="1"/><rect x="644.5" y="593" width="4" height="4" fill="#000"/><rect x="612.5" y="531.5" width="68" height="50" fill="#ffffe1" stroke="#000" stroke-width="1"/><text x="646.5" y="547.8" font-size="11" text-anchor="middle" textLength="56.7" lengthAdjust="spacingAndGlyphs">101.80 MHz</text><text x="646.5" y="560.8" font-size="11" text-anchor="middle" textLength="23.8" lengthAdjust="spacingAndGlyphs">837E</text><text x="643.5" y="573.8" font-size="11" text-anchor="middle" textLength="12.2" lengthAdjust="spacingAndGlyphs">JO</text>
<path d="M732.5 565V580" stroke="#000" stroke-width="1"/><rect x="730.5" y="578" width="4" height="4" fill="#000"/><rect x="698.5" y="528.5" width="68" height="37" fill="#ffffe1" stroke="#000" stroke-width="1"/><text x="732.5" y="544.8" font-size="11" text-anchor="middle" textLength="56.7" lengthAdjust="spacingAndGlyphs">103.90 MHz</text><text x="732.5" y="557.8" font-size="11" text-anchor="middle" textLength="15.7" lengthAdjust="spacingAndGlyphs">----</text>
<path d="M756.5 524V562" stroke="#000" stroke-width="1"/><rect x="754.5" y="560" width="4" height="4" fill="#000"/><rect x="722.5" y="474.5" width="68" height="50" fill="#ffffe1" stroke="#000" stroke-width="1"/><text x="756.5" y="490.8" font-size="11" text-anchor="middle" textLength="56.7" lengthAdjust="spacingAndGlyphs">104.50 MHz</text><text x="756.5" y="503.8" font-size="11" text-anchor="middle" textLength="25.1" lengthAdjust="spacingAndGlyphs">824D</text><text x="756.5" y="516.8" font-size="11" text-anchor="middle" textLength="43.9" lengthAdjust="spacingAndGlyphs">DAR5 FM</text>
<path d="M780.5 470V599" stroke="#000" stroke-width="1"/><rect x="778.5" y="597" width="4" height="4" fill="#000"/><rect x="746.5" y="433.5" width="68" height="37" fill="#ffffe1" stroke="#000" stroke-width="1"/><text x="780.5" y="449.8" font-size="11" text-anchor="middle" textLength="56.7" lengthAdjust="spacingAndGlyphs">105.10 MHz</text><text x="780.5" y="462.8" font-size="11" text-anchor="middle" textLength="15.7" lengthAdjust="spacingAndGlyphs">----</text>
<path d="M815.5 430V562" stroke="#000" stroke-width="1"/><rect x="813.5" y="560" width="4" height="4" fill="#000"/><rect x="781.5" y="380.5" width="68" height="50" fill="#ffffe1" stroke="#000" stroke-width="1"/><text x="815.5" y="397.8" font-size="11" text-anchor="middle" textLength="56.7" lengthAdjust="spacingAndGlyphs">105.90 MHz</text><text x="815.5" y="410.8" font-size="11" text-anchor="middle" textLength="23.7" lengthAdjust="spacingAndGlyphs">8388</text>
<path d="M837.5 566V580" stroke="#000" stroke-width="1"/><rect x="835.5" y="578" width="4" height="4" fill="#000"/><rect x="803.5" y="516.5" width="68" height="50" fill="#ffffe1" stroke="#000" stroke-width="1"/><text x="837.5" y="532.8" font-size="11" text-anchor="middle" textLength="56.7" lengthAdjust="spacingAndGlyphs">106.50 MHz</text><text x="837.5" y="545.8" font-size="11" text-anchor="middle" textLength="23.4" lengthAdjust="spacingAndGlyphs">837F</text><text x="837.5" y="558.8" font-size="11" text-anchor="middle" textLength="33.0" lengthAdjust="spacingAndGlyphs">FOCUS</text>
<path d="M861.5 512V610" stroke="#000" stroke-width="1"/><rect x="859.5" y="608" width="4" height="4" fill="#000"/><rect x="827.5" y="475.5" width="68" height="37" fill="#ffffe1" stroke="#000" stroke-width="1"/><text x="861.5" y="491.8" font-size="11" text-anchor="middle" textLength="56.7" lengthAdjust="spacingAndGlyphs">107.10 MHz</text><text x="861.5" y="504.8" font-size="11" text-anchor="middle" textLength="15.7" lengthAdjust="spacingAndGlyphs">----</text>
<path d="M102 557H898" stroke="#008000" stroke-width="2" stroke-dasharray="5 4" fill="none"/>
<path d="M168.6 738.0 L168.6 587.3 L169.6 602.7 L170.6 622.7 L171.6 640.9 L172.6 652.0 L173.6 654.4 L174.6 651.5 L175.6 631.9 L176.6 610.4 L177.6 607.1 L178.6 610.4 L179.6 625.7 L180.6 644.1 L181.6 651.9 L182.6 652.4 L183.6 647.1 L184.6 625.7 L185.6 593.8 L186.6 563.7 L187.6 547.0 L188.6 544.4 L189.6 546.0 L190.6 558.6 L191.6 582.7 L192.6 607.5 L193.6 624.9 L194.6 639.4 L195.6 649.9 L196.6 654.1 L197.6 654.4 L198.6 651.8 L199.6 641.2 L200.6 631.4 L201.6 629.5 L202.6 630.7 L203.6 639.3 L204.6 651.6 L205.6 655.9 L206.6 655.9 L207.6 651.9 L208.6 639.1 L209.6 621.0 L210.6 603.3 L211.6 591.8 L212.6 588.8 L213.6 589.1 L214.6 593.6 L215.6 606.9 L216.6 625.3 L217.6 643.0 L218.6 654.3 L219.6 657.0 L220.6 657.1 L221.6 656.4 L222.6 654.2 L223.6 650.5 L224.6 645.8 L225.6 640.4 L226.6 634.7 L227.6 629.1 L228.6 623.8 L229.6 619.4 L230.6 616.1 L231.6 614.2 L232.6 613.8 L233.6 613.9 L234.6 615.4 L235.6 619.7 L236.6 625.9 L237.6 632.7 L238.6 638.4 L239.6 641.7 L240.6 642.4 L241.6 640.5 L242.6 630.0 L243.6 626.3 L244.6 628.1 L245.6 639.8 L246.6 644.5 L247.6 644.4 L248.6 639.3 L249.6 630.0 L250.6 625.6 L251.6 625.1 L252.6 625.9 L253.6 628.8 L254.6 633.3 L255.6 637.9 L256.6 641.3 L257.6 642.3 L258.6 642.4 L259.6 641.8 L260.6 639.6 L261.6 635.8 L262.6 631.0 L263.6 625.7 L264.6 620.5 L265.6 616.0 L266.6 612.8 L267.6 611.4 L268.6 611.2 L269.6 611.3 L270.6 612.1 L271.6 613.7 L272.6 615.7 L273.6 618.2 L274.6 621.6 L275.6 625.8 L276.6 630.5 L277.6 635.2 L278.6 639.6 L279.6 643.2 L280.6 645.6 L281.6 646.7 L282.6 646.8 L283.6 646.0 L284.6 641.5 L285.6 633.7 L286.6 626.2 L287.6 622.2 L288.6 621.6 L289.6 621.8 L290.6 623.1 L291.6 625.8 L292.6 629.8 L293.6 634.5 L294.6 639.5 L295.6 644.3 L296.6 648.6 L297.6 651.7 L298.6 653.4 L299.6 653.7 L300.6 653.6 L301.6 652.7 L302.6 650.0 L303.6 645.9 L304.6 640.7 L305.6 635.1 L306.6 629.5 L307.6 624.5 L308.6 620.5 L309.6 618.1 L310.6 617.3 L311.6 617.3 L312.6 618.4 L313.6 622.1 L314.6 627.8 L315.6 633.6 L316.6 637.6 L317.6 638.8 L318.6 638.1 L319.6 631.7 L320.6 619.6 L321.6 617.3 L322.6 617.6 L323.6 620.3 L324.6 625.8 L325.6 632.7 L326.6 639.5 L327.6 644.5 L328.6 646.5 L329.6 646.6 L330.6 643.1 L331.6 625.8 L332.6 601.8 L333.6 586.7 L334.6 584.3 L335.6 585.8 L336.6 596.7 L337.6 617.4 L338.6 638.8 L339.6 651.5 L340.6 653.7 L341.6 653.3 L342.6 650.3 L343.6 643.5 L344.6 634.4 L345.6 625.3 L346.6 618.3 L347.6 615.1 L348.6 614.7 L349.6 615.4 L350.6 619.8 L351.6 628.1 L352.6 637.9 L353.6 646.2 L354.6 650.5 L355.6 651.1 L356.6 649.8 L357.6 640.6 L358.6 621.8 L359.6 599.4 L360.6 580.4 L361.6 570.9 L362.6 569.5 L363.6 570.4 L364.6 576.7 L365.6 589.6 L366.6 605.9 L367.6 621.8 L368.6 633.6 L369.6 638.4 L370.6 639.0 L371.6 638.8 L372.6 637.7 L373.6 635.7 L374.6 632.9 L375.6 629.7 L376.6 626.3 L377.6 623.1 L378.6 620.3 L379.6 618.4 L380.6 617.4 L381.6 617.3 L382.6 617.4 L383.6 618.9 L384.6 622.3 L385.6 627.3 L386.6 633.1 L387.6 639.2 L388.6 644.8 L389.6 649.3 L390.6 652.0 L391.6 652.8 L392.6 652.4 L393.6 647.5 L394.6 630.4 L395.6 605.2 L396.6 579.9 L397.6 562.7 L398.6 557.8 L399.6 557.8 L400.6 562.1 L401.6 576.9 L402.6 599.4 L403.6 624.0 L404.6 645.2 L405.6 657.8 L406.6 660.5 L407.6 660.3 L408.6 657.0 L409.6 647.8 L410.6 634.9 L411.6 621.3 L412.6 610.2 L413.6 604.4 L414.6 603.4 L415.6 603.7 L416.6 606.6 L417.6 613.1 L418.6 621.8 L419.6 630.5 L420.6 637.2 L421.6 640.3 L422.6 640.6 L423.6 638.8 L424.6 630.3 L425.6 626.4 L426.6 626.2 L427.6 628.1 L428.6 634.2 L429.6 643.2 L430.6 652.9 L431.6 661.1 L432.6 665.8 L433.6 666.7 L434.6 665.4 L435.6 654.9 L436.6 629.4 L437.6 597.6 L438.6 571.3 L439.6 559.7 L440.6 558.3 L441.6 559.9 L442.6 569.3 L443.6 586.7 L444.6 608.2 L445.6 629.3 L446.6 645.6 L447.6 653.5 L448.6 654.6 L449.6 654.4 L450.6 652.7 L451.6 649.1 L452.6 644.2 L453.6 638.6 L454.6 633.2 L455.6 628.8 L456.6 626.0 L457.6 625.2 L458.6 625.4 L459.6 627.8 L460.6 632.7 L461.6 633.7 L462.6 633.4 L463.6 630.8 L464.6 625.9 L465.6 620.8 L466.6 617.8 L467.6 617.3 L468.6 617.4 L469.6 618.3 L470.6 620.5 L471.6 623.9 L472.6 627.9 L473.6 632.2 L474.6 636.4 L475.6 640.1 L476.6 643.0 L477.6 644.6 L478.6 645.0 L479.6 643.8 L480.6 635.5 L481.6 623.7 L482.6 621.7 L483.6 622.9 L484.6 629.7 L485.6 639.7 L486.6 646.4 L487.6 647.6 L488.6 646.3 L489.6 636.3 L490.6 613.0 L491.6 580.6 L492.6 544.8 L493.6 511.1 L494.6 485.2 L495.6 471.9 L496.6 469.7 L497.6 474.2 L498.6 506.7 L499.6 563.7 L500.6 601.7 L501.6 607.4 L502.6 599.2 L503.6 552.4 L504.6 513.1 L505.6 507.0 L506.6 508.9 L507.6 519.3 L508.6 539.1 L509.6 564.7 L510.6 592.1 L511.6 617.1 L512.6 635.7 L513.6 644.6 L514.6 645.9 L515.6 645.6 L516.6 643.6 L517.6 639.0 L518.6 632.3 L519.6 624.3 L520.6 615.8 L521.6 607.6 L522.6 600.3 L523.6 594.9 L524.6 591.9 L525.6 591.2 L526.6 591.4 L527.6 593.6 L528.6 599.6 L529.6 608.2 L530.6 617.5 L531.6 625.4 L532.6 630.1 L533.6 631.1 L534.6 630.9 L535.6 629.1 L536.6 624.4 L537.6 618.3 L538.6 613.1 L539.6 610.6 L540.6 610.3 L541.6 610.8 L542.6 613.6 L543.6 619.1 L544.6 626.0 L545.6 632.9 L546.6 638.4 L547.6 641.1 L548.6 641.6 L549.6 640.8 L550.6 635.6 L551.6 626.3 L552.6 619.1 L553.6 617.4 L554.6 617.4 L555.6 619.0 L556.6 623.2 L557.6 629.4 L558.6 636.4 L559.6 642.9 L560.6 647.7 L561.6 650.0 L562.6 650.2 L563.6 648.6 L564.6 637.8 L565.6 615.9 L566.6 587.6 L567.6 559.0 L568.6 536.0 L569.6 523.9 L570.6 521.8 L571.6 522.6 L572.6 529.3 L573.6 545.5 L574.6 568.5 L575.6 594.4 L576.6 619.3 L577.6 639.3 L578.6 650.9 L579.6 653.5 L580.6 653.6 L581.6 652.0 L582.6 647.5 L583.6 640.8 L584.6 633.1 L585.6 625.9 L586.6 620.3 L587.6 617.7 L588.6 617.3 L589.6 617.8 L590.6 621.2 L591.6 627.3 L592.6 632.2 L593.6 633.6 L594.6 631.5 L595.6 619.9 L596.6 617.4 L597.6 618.7 L598.6 624.4 L599.6 631.8 L600.6 636.4 L601.6 637.2 L602.6 636.8 L603.6 633.4 L604.6 627.4 L605.6 622.8 L606.6 621.7 L607.6 621.8 L608.6 623.1 L609.6 626.7 L610.6 631.5 L611.6 635.8 L612.6 638.4 L613.6 638.9 L614.6 638.7 L615.6 636.5 L616.6 631.2 L617.6 624.3 L618.6 618.1 L619.6 614.5 L620.6 613.8 L621.6 614.0 L622.6 615.4 L623.6 618.7 L624.6 623.3 L625.6 628.0 L626.6 631.7 L627.6 633.5 L628.6 633.7 L629.6 633.2 L630.6 629.3 L631.6 623.0 L632.6 618.3 L633.6 617.3 L634.6 617.6 L635.6 619.9 L636.6 625.7 L637.6 633.0 L638.6 639.7 L639.6 643.5 L640.6 644.1 L641.6 642.7 L642.6 631.2 L643.6 606.2 L644.6 578.5 L645.6 560.5 L646.6 556.7 L647.6 557.1 L648.6 562.7 L649.6 577.3 L650.6 597.4 L651.6 618.3 L652.6 635.1 L653.6 643.7 L654.6 645.0 L655.6 644.7 L656.6 641.8 L657.6 635.6 L658.6 627.5 L659.6 619.4 L660.6 613.3 L661.6 610.7 L662.6 610.3 L663.6 611.1 L664.6 615.9 L665.6 624.6 L666.6 634.3 L667.6 642.1 L668.6 645.5 L669.6 645.8 L670.6 643.8 L671.6 632.8 L672.6 614.9 L673.6 598.1 L674.6 589.7 L675.6 588.6 L676.6 589.6 L677.6 595.5 L678.6 606.9 L679.6 621.1 L680.6 634.6 L681.6 644.4 L682.6 648.1 L683.6 648.4 L684.6 646.1 L685.6 636.1 L686.6 623.2 L687.6 615.7 L688.6 614.7 L689.6 615.3 L690.6 619.2 L691.6 626.6 L692.6 635.2 L693.6 642.2 L694.6 645.5 L695.6 645.9 L696.6 645.1 L697.6 640.2 L698.6 631.8 L699.6 623.2 L700.6 618.2 L701.6 617.5 L702.6 619.6 L703.6 625.7 L704.6 626.7 L705.6 626.1 L706.6 624.0 L707.6 620.9 L708.6 617.8 L709.6 615.6 L710.6 614.7 L711.6 614.7 L712.6 615.0 L713.6 616.7 L714.6 619.8 L715.6 623.9 L716.6 628.6 L717.6 633.5 L718.6 638.0 L719.6 641.9 L720.6 644.6 L721.6 645.8 L722.6 645.9 L723.6 645.1 L724.6 639.3 L725.6 626.8 L726.6 609.4 L727.6 589.6 L728.6 569.7 L729.6 552.1 L730.6 539.3 L731.6 533.1 L732.6 532.1 L733.6 533.4 L734.6 542.9 L735.6 563.8 L736.6 591.6 L737.6 620.2 L738.6 643.8 L739.6 657.1 L740.6 659.7 L741.6 658.5 L742.6 649.0 L743.6 630.8 L744.6 619.0 L745.6 617.3 L746.6 619.5 L747.6 630.9 L748.6 640.9 L749.6 642.4 L750.6 640.4 L751.6 628.2 L752.6 605.5 L753.6 579.5 L754.6 558.5 L755.6 549.0 L756.6 547.8 L757.6 549.7 L758.6 560.6 L759.6 581.2 L760.6 606.3 L761.6 630.1 L762.6 647.0 L763.6 653.0 L764.6 653.5 L765.6 650.3 L766.6 637.1 L767.6 620.7 L768.6 611.6 L769.6 610.3 L770.6 611.4 L771.6 617.4 L772.6 627.9 L773.6 638.0 L774.6 643.4 L775.6 644.1 L776.6 642.1 L777.6 628.8 L778.6 605.4 L779.6 583.9 L780.6 574.9 L781.6 574.0 L782.6 576.3 L783.6 587.4 L784.6 605.7 L785.6 626.2 L786.6 643.1 L787.6 651.6 L788.6 652.8 L789.6 648.4 L790.6 625.0 L791.6 612.0 L792.6 610.6 L793.6 613.2 L794.6 621.1 L795.6 629.6 L796.6 633.3 L797.6 633.4 L798.6 629.4 L799.6 618.0 L800.6 614.9 L801.6 615.5 L802.6 621.7 L803.6 635.4 L804.6 650.8 L805.6 660.9 L806.6 663.1 L807.6 662.5 L808.6 656.3 L809.6 640.0 L810.6 617.1 L811.6 593.3 L812.6 574.1 L813.6 564.1 L814.6 562.6 L815.6 563.8 L816.6 573.1 L817.6 593.0 L818.6 617.1 L819.6 637.8 L820.6 648.6 L821.6 650.2 L822.6 650.2 L823.6 649.3 L824.6 647.4 L825.6 644.5 L826.6 641.1 L827.6 637.4 L828.6 633.6 L829.6 628.8 L830.6 622.5 L831.6 615.2 L832.6 607.5 L833.6 600.1 L834.6 593.4 L835.6 588.3 L836.6 585.2 L837.6 584.3 L838.6 584.4 L839.6 586.3 L840.6 593.5 L841.6 604.7 L842.6 617.6 L843.6 629.4 L844.6 637.6 L845.6 640.4 L846.6 637.3 L847.6 621.0 L848.6 623.9 L848.6 738.0 Z" fill="rgba(255,0,0,0.5)"/>
<path d="M168.6 587.3 L169.6 602.7 L170.6 622.7 L171.6 640.9 L172.6 652.0 L173.6 654.4 L174.6 651.5 L175.6 631.9 L176.6 610.4 L177.6 607.1 L178.6 610.4 L179.6 625.7 L180.6 644.1 L181.6 651.9 L182.6 652.4 L183.6 647.1 L184.6 625.7 L185.6 593.8 L186.6 563.7 L187.6 547.0 L188.6 544.4 L189.6 546.0 L190.6 558.6 L191.6 582.7 L192.6 607.5 L193.6 624.9 L194.6 639.4 L195.6 649.9 L196.6 654.1 L197.6 654.4 L198.6 651.8 L199.6 641.2 L200.6 631.4 L201.6 629.5 L202.6 630.7 L203.6 639.3 L204.6 651.6 L205.6 655.9 L206.6 655.9 L207.6 651.9 L208.6 639.1 L209.6 621.0 L210.6 603.3 L211.6 591.8 L212.6 588.8 L213.6 589.1 L214.6 593.6 L215.6 606.9 L216.6 625.3 L217.6 643.0 L218.6 654.3 L219.6 657.0 L220.6 657.1 L221.6 656.4 L222.6 654.2 L223.6 650.5 L224.6 645.8 L225.6 640.4 L226.6 634.7 L227.6 629.1 L228.6 623.8 L229.6 619.4 L230.6 616.1 L231.6 614.2 L232.6 613.8 L233.6 613.9 L234.6 615.4 L235.6 619.7 L236.6 625.9 L237.6 632.7 L238.6 638.4 L239.6 641.7 L240.6 642.4 L241.6 640.5 L242.6 630.0 L243.6 626.3 L244.6 628.1 L245.6 639.8 L246.6 644.5 L247.6 644.4 L248.6 639.3 L249.6 630.0 L250.6 625.6 L251.6 625.1 L252.6 625.9 L253.6 628.8 L254.6 633.3 L255.6 637.9 L256.6 641.3 L257.6 642.3 L258.6 642.4 L259.6 641.8 L260.6 639.6 L261.6 635.8 L262.6 631.0 L263.6 625.7 L264.6 620.5 L265.6 616.0 L266.6 612.8 L267.6 611.4 L268.6 611.2 L269.6 611.3 L270.6 612.1 L271.6 613.7 L272.6 615.7 L273.6 618.2 L274.6 621.6 L275.6 625.8 L276.6 630.5 L277.6 635.2 L278.6 639.6 L279.6 643.2 L280.6 645.6 L281.6 646.7 L282.6 646.8 L283.6 646.0 L284.6 641.5 L285.6 633.7 L286.6 626.2 L287.6 622.2 L288.6 621.6 L289.6 621.8 L290.6 623.1 L291.6 625.8 L292.6 629.8 L293.6 634.5 L294.6 639.5 L295.6 644.3 L296.6 648.6 L297.6 651.7 L298.6 653.4 L299.6 653.7 L300.6 653.6 L301.6 652.7 L302.6 650.0 L303.6 645.9 L304.6 640.7 L305.6 635.1 L306.6 629.5 L307.6 624.5 L308.6 620.5 L309.6 618.1 L310.6 617.3 L311.6 617.3 L312.6 618.4 L313.6 622.1 L314.6 627.8 L315.6 633.6 L316.6 637.6 L317.6 638.8 L318.6 638.1 L319.6 631.7 L320.6 619.6 L321.6 617.3 L322.6 617.6 L323.6 620.3 L324.6 625.8 L325.6 632.7 L326.6 639.5 L327.6 644.5 L328.6 646.5 L329.6 646.6 L330.6 643.1 L331.6 625.8 L332.6 601.8 L333.6 586.7 L334.6 584.3 L335.6 585.8 L336.6 596.7 L337.6 617.4 L338.6 638.8 L339.6 651.5 L340.6 653.7 L341.6 653.3 L342.6 650.3 L343.6 643.5 L344.6 634.4 L345.6 625.3 L346.6 618.3 L347.6 615.1 L348.6 614.7 L349.6 615.4 L350.6 619.8 L351.6 628.1 L352.6 637.9 L353.6 646.2 L354.6 650.5 L355.6 651.1 L356.6 649.8 L357.6 640.6 L358.6 621.8 L359.6 599.4 L360.6 580.4 L361.6 570.9 L362.6 569.5 L363.6 570.4 L364.6 576.7 L365.6 589.6 L366.6 605.9 L367.6 621.8 L368.6 633.6 L369.6 638.4 L370.6 639.0 L371.6 638.8 L372.6 637.7 L373.6 635.7 L374.6 632.9 L375.6 629.7 L376.6 626.3 L377.6 623.1 L378.6 620.3 L379.6 618.4 L380.6 617.4 L381.6 617.3 L382.6 617.4 L383.6 618.9 L384.6 622.3 L385.6 627.3 L386.6 633.1 L387.6 639.2 L388.6 644.8 L389.6 649.3 L390.6 652.0 L391.6 652.8 L392.6 652.4 L393.6 647.5 L394.6 630.4 L395.6 605.2 L396.6 579.9 L397.6 562.7 L398.6 557.8 L399.6 557.8 L400.6 562.1 L401.6 576.9 L402.6 599.4 L403.6 624.0 L404.6 645.2 L405.6 657.8 L406.6 660.5 L407.6 660.3 L408.6 657.0 L409.6 647.8 L410.6 634.9 L411.6 621.3 L412.6 610.2 L413.6 604.4 L414.6 603.4 L415.6 603.7 L416.6 606.6 L417.6 613.1 L418.6 621.8 L419.6 630.5 L420.6 637.2 L421.6 640.3 L422.6 640.6 L423.6 638.8 L424.6 630.3 L425.6 626.4 L426.6 626.2 L427.6 628.1 L428.6 634.2 L429.6 643.2 L430.6 652.9 L431.6 661.1 L432.6 665.8 L433.6 666.7 L434.6 665.4 L435.6 654.9 L436.6 629.4 L437.6 597.6 L438.6 571.3 L439.6 559.7 L440.6 558.3 L441.6 559.9 L442.6 569.3 L443.6 586.7 L444.6 608.2 L445.6 629.3 L446.6 645.6 L447.6 653.5 L448.6 654.6 L449.6 654.4 L450.6 652.7 L451.6 649.1 L452.6 644.2 L453.6 638.6 L454.6 633.2 L455.6 628.8 L456.6 626.0 L457.6 625.2 L458.6 625.4 L459.6 627.8 L460.6 632.7 L461.6 633.7 L462.6 633.4 L463.6 630.8 L464.6 625.9 L465.6 620.8 L466.6 617.8 L467.6 617.3 L468.6 617.4 L469.6 618.3 L470.6 620.5 L471.6 623.9 L472.6 627.9 L473.6 632.2 L474.6 636.4 L475.6 640.1 L476.6 643.0 L477.6 644.6 L478.6 645.0 L479.6 643.8 L480.6 635.5 L481.6 623.7 L482.6 621.7 L483.6 622.9 L484.6 629.7 L485.6 639.7 L486.6 646.4 L487.6 647.6 L488.6 646.3 L489.6 636.3 L490.6 613.0 L491.6 580.6 L492.6 544.8 L493.6 511.1 L494.6 485.2 L495.6 471.9 L496.6 469.7 L497.6 474.2 L498.6 506.7 L499.6 563.7 L500.6 601.7 L501.6 607.4 L502.6 599.2 L503.6 552.4 L504.6 513.1 L505.6 507.0 L506.6 508.9 L507.6 519.3 L508.6 539.1 L509.6 564.7 L510.6 592.1 L511.6 617.1 L512.6 635.7 L513.6 644.6 L514.6 645.9 L515.6 645.6 L516.6 643.6 L517.6 639.0 L518.6 632.3 L519.6 624.3 L520.6 615.8 L521.6 607.6 L522.6 600.3 L523.6 594.9 L524.6 591.9 L525.6 591.2 L526.6 591.4 L527.6 593.6 L528.6 599.6 L529.6 608.2 L530.6 617.5 L531.6 625.4 L532.6 630.1 L533.6 631.1 L534.6 630.9 L535.6 629.1 L536.6 624.4 L537.6 618.3 L538.6 613.1 L539.6 610.6 L540.6 610.3 L541.6 610.8 L542.6 613.6 L543.6 619.1 L544.6 626.0 L545.6 632.9 L546.6 638.4 L547.6 641.1 L548.6 641.6 L549.6 640.8 L550.6 635.6 L551.6 626.3 L552.6 619.1 L553.6 617.4 L554.6 617.4 L555.6 619.0 L556.6 623.2 L557.6 629.4 L558.6 636.4 L559.6 642.9 L560.6 647.7 L561.6 650.0 L562.6 650.2 L563.6 648.6 L564.6 637.8 L565.6 615.9 L566.6 587.6 L567.6 559.0 L568.6 536.0 L569.6 523.9 L570.6 521.8 L571.6 522.6 L572.6 529.3 L573.6 545.5 L574.6 568.5 L575.6 594.4 L576.6 619.3 L577.6 639.3 L578.6 650.9 L579.6 653.5 L580.6 653.6 L581.6 652.0 L582.6 647.5 L583.6 640.8 L584.6 633.1 L585.6 625.9 L586.6 620.3 L587.6 617.7 L588.6 617.3 L589.6 617.8 L590.6 621.2 L591.6 627.3 L592.6 632.2 L593.6 633.6 L594.6 631.5 L595.6 619.9 L596.6 617.4 L597.6 618.7 L598.6 624.4 L599.6 631.8 L600.6 636.4 L601.6 637.2 L602.6 636.8 L603.6 633.4 L604.6 627.4 L605.6 622.8 L606.6 621.7 L607.6 621.8 L608.6 623.1 L609.6 626.7 L610.6 631.5 L611.6 635.8 L612.6 638.4 L613.6 638.9 L614.6 638.7 L615.6 636.5 L616.6 631.2 L617.6 624.3 L618.6 618.1 L619.6 614.5 L620.6 613.8 L621.6 614.0 L622.6 615.4 L623.6 618.7 L624.6 623.3 L625.6 628.0 L626.6 631.7 L627.6 633.5 L628.6 633.7 L629.6 633.2 L630.6 629.3 L631.6 623.0 L632.6 618.3 L633.6 617.3 L634.6 617.6 L635.6 619.9 L636.6 625.7 L637.6 633.0 L638.6 639.7 L639.6 643.5 L640.6 644.1 L641.6 642.7 L642.6 631.2 L643.6 606.2 L644.6 578.5 L645.6 560.5 L646.6 556.7 L647.6 557.1 L648.6 562.7 L649.6 577.3 L650.6 597.4 L651.6 618.3 L652.6 635.1 L653.6 643.7 L654.6 645.0 L655.6 644.7 L656.6 641.8 L657.6 635.6 L658.6 627.5 L659.6 619.4 L660.6 613.3 L661.6 610.7 L662.6 610.3 L663.6 611.1 L664.6 615.9 L665.6 624.6 L666.6 634.3 L667.6 642.1 L668.6 645.5 L669.6 645.8 L670.6 643.8 L671.6 632.8 L672.6 614.9 L673.6 598.1 L674.6 589.7 L675.6 588.6 L676.6 589.6 L677.6 595.5 L678.6 606.9 L679.6 621.1 L680.6 634.6 L681.6 644.4 L682.6 648.1 L683.6 648.4 L684.6 646.1 L685.6 636.1 L686.6 623.2 L687.6 615.7 L688.6 614.7 L689.6 615.3 L690.6 619.2 L691.6 626.6 L692.6 635.2 L693.6 642.2 L694.6 645.5 L695.6 645.9 L696.6 645.1 L697.6 640.2 L698.6 631.8 L699.6 623.2 L700.6 618.2 L701.6 617.5 L702.6 619.6 L703.6 625.7 L704.6 626.7 L705.6 626.1 L706.6 624.0 L707.6 620.9 L708.6 617.8 L709.6 615.6 L710.6 614.7 L711.6 614.7 L712.6 615.0 L713.6 616.7 L714.6 619.8 L715.6 623.9 L716.6 628.6 L717.6 633.5 L718.6 638.0 L719.6 641.9 L720.6 644.6 L721.6 645.8 L722.6 645.9 L723.6 645.1 L724.6 639.3 L725.6 626.8 L726.6 609.4 L727.6 589.6 L728.6 569.7 L729.6 552.1 L730.6 539.3 L731.6 533.1 L732.6 532.1 L733.6 533.4 L734.6 542.9 L735.6 563.8 L736.6 591.6 L737.6 620.2 L738.6 643.8 L739.6 657.1 L740.6 659.7 L741.6 658.5 L742.6 649.0 L743.6 630.8 L744.6 619.0 L745.6 617.3 L746.6 619.5 L747.6 630.9 L748.6 640.9 L749.6 642.4 L750.6 640.4 L751.6 628.2 L752.6 605.5 L753.6 579.5 L754.6 558.5 L755.6 549.0 L756.6 547.8 L757.6 549.7 L758.6 560.6 L759.6 581.2 L760.6 606.3 L761.6 630.1 L762.6 647.0 L763.6 653.0 L764.6 653.5 L765.6 650.3 L766.6 637.1 L767.6 620.7 L768.6 611.6 L769.6 610.3 L770.6 611.4 L771.6 617.4 L772.6 627.9 L773.6 638.0 L774.6 643.4 L775.6 644.1 L776.6 642.1 L777.6 628.8 L778.6 605.4 L779.6 583.9 L780.6 574.9 L781.6 574.0 L782.6 576.3 L783.6 587.4 L784.6 605.7 L785.6 626.2 L786.6 643.1 L787.6 651.6 L788.6 652.8 L789.6 648.4 L790.6 625.0 L791.6 612.0 L792.6 610.6 L793.6 613.2 L794.6 621.1 L795.6 629.6 L796.6 633.3 L797.6 633.4 L798.6 629.4 L799.6 618.0 L800.6 614.9 L801.6 615.5 L802.6 621.7 L803.6 635.4 L804.6 650.8 L805.6 660.9 L806.6 663.1 L807.6 662.5 L808.6 656.3 L809.6 640.0 L810.6 617.1 L811.6 593.3 L812.6 574.1 L813.6 564.1 L814.6 562.6 L815.6 563.8 L816.6 573.1 L817.6 593.0 L818.6 617.1 L819.6 637.8 L820.6 648.6 L821.6 650.2 L822.6 650.2 L823.6 649.3 L824.6 647.4 L825.6 644.5 L826.6 641.1 L827.6 637.4 L828.6 633.6 L829.6 628.8 L830.6 622.5 L831.6 615.2 L832.6 607.5 L833.6 600.1 L834.6 593.4 L835.6 588.3 L836.6 585.2 L837.6 584.3 L838.6 584.4 L839.6 586.3 L840.6 593.5 L841.6 604.7 L842.6 617.6 L843.6 629.4 L844.6 637.6 L845.6 640.4 L846.6 637.3 L847.6 621.0 L848.6 623.9" fill="none" stroke="rgba(255,0,0,0.55)" stroke-width="0.6" stroke-dasharray="2 3"/>
<path d="M472 403V627" stroke="#800000" stroke-width="2" stroke-dasharray="5 3" fill="none"/>
<path d="M472 629V738" stroke="#dcdc8c" stroke-width="2" stroke-dasharray="5 3" fill="none"/>
</g>
<path d="M445.5 600L472 627" stroke="#000" stroke-width="1"/><rect x="470" y="625" width="4" height="4" fill="#000"/>
<rect x="357.5" y="579.5" width="88" height="21" fill="#ffffe1" stroke="#000"/>
<text x="361" y="594" font-size="11">X:97.51, Y:24.53</text>
<rect x="746.5" y="406.5" width="148" height="30" fill="none" stroke="#a8a8a8"/><rect x="748.6" y="408.8" width="143.7" height="25.2" fill="#fff"/>
<path d="M42 737.5H46M44 733.5H46M44 729.5H46M44 725.5H46M44 722.5H46M42 718.5H46M44 714.5H46M44 711.5H46M44 707.5H46M44 703.5H46M42 699.5H46M44 696.5H46M44 692.5H46M44 688.5H46M44 684.5H46M42 681.5H46M44 677.5H46M44 673.5H46M44 670.5H46M44 666.5H46M42 662.5H46M44 658.5H46M44 655.5H46M44 651.5H46M44 647.5H46M42 643.5H46M44 640.5H46M44 636.5H46M44 632.5H46M44 629.5H46M42 625.5H46M44 621.5H46M44 617.5H46M44 614.5H46M44 610.5H46M42 606.5H46M44 603.5H46M44 599.5H46M44 595.5H46M44 591.5H46M42 588.5H46M44 584.5H46M44 580.5H46M44 576.5H46M44 573.5H46M42 569.5H46M44 565.5H46M44 562.5H46M44 558.5H46M44 554.5H46M42 550.5H46M44 547.5H46M44 543.5H46M44 539.5H46M44 535.5H46M42 532.5H46M44 528.5H46M44 524.5H46M44 521.5H46M44 517.5H46M42 513.5H46M44 509.5H46M44 506.5H46M44 502.5H46M44 498.5H46M42 495.5H46M44 491.5H46M44 487.5H46M44 483.5H46M44 480.5H46M42 476.5H46M44 472.5H46M44 468.5H46M44 465.5H46M44 461.5H46M42 457.5H46M44 454.5H46M44 450.5H46M44 446.5H46M44 442.5H46M42 439.5H46M44 435.5H46M44 431.5H46M44 427.5H46M44 424.5H46M42 420.5H46M44 416.5H46M44 413.5H46M44 409.5H46M44 405.5H46M47.5 738V741.2M67.5 738V741.2M88.5 738V743.2M108.5 738V741.2M128.5 738V741.2M148.5 738V741.2M169.5 738V743.2M189.5 738V741.2M209.5 738V741.2M229.5 738V741.2M250.5 738V743.2M270.5 738V741.2M290.5 738V741.2M310.5 738V741.2M331.5 738V743.2M351.5 738V741.2M371.5 738V741.2M392.5 738V741.2M412.5 738V743.2M432.5 738V741.2M452.5 738V741.2M473.5 738V741.2M493.5 738V743.2M513.5 738V741.2M533.5 738V741.2M554.5 738V741.2M574.5 738V743.2M594.5 738V741.2M614.5 738V741.2M635.5 738V741.2M655.5 738V743.2M675.5 738V741.2M696.5 738V741.2M716.5 738V741.2M736.5 738V743.2M756.5 738V741.2M777.5 738V741.2M797.5 738V741.2M817.5 738V743.2M837.5 738V741.2M858.5 738V741.2M878.5 738V741.2M898.5 738V743.2" stroke="#000" stroke-width="1" fill="none"/>
<path d="M46.6 403V738.8M46 738.2H898.6" stroke="#000" stroke-width="1.4" fill="none"/>
<rect x="42.5" y="546.5" width="56" height="21" fill="#ffffe1" stroke="#008000" stroke-width="1.2"/>
<text x="46.5" y="560.7" font-size="10.2">REF:43.25</text>
<text x="38.5" y="742.0" font-size="10.2" text-anchor="end">-5</text>
<text x="38.5" y="723.0" font-size="10.2" text-anchor="end">0</text>
<text x="38.5" y="704.0" font-size="10.2" text-anchor="end">5</text>
<text x="38.5" y="686.0" font-size="10.2" text-anchor="end">10</text>
<text x="38.5" y="667.0" font-size="10.2" text-anchor="end">15</text>
<text x="38.5" y="648.0" font-size="10.2" text-anchor="end">20</text>
<text x="38.5" y="630.0" font-size="10.2" text-anchor="end">25</text>
<text x="38.5" y="611.0" font-size="10.2" text-anchor="end">30</text>
<text x="38.5" y="593.0" font-size="10.2" text-anchor="end">35</text>
<text x="38.5" y="574.0" font-size="10.2" text-anchor="end">40</text>
<text x="38.5" y="555.0" font-size="10.2" text-anchor="end">45</text>
<text x="38.5" y="537.0" font-size="10.2" text-anchor="end">50</text>
<text x="38.5" y="518.0" font-size="10.2" text-anchor="end">55</text>
<text x="38.5" y="500.0" font-size="10.2" text-anchor="end">60</text>
<text x="38.5" y="481.0" font-size="10.2" text-anchor="end">65</text>
<text x="38.5" y="462.0" font-size="10.2" text-anchor="end">70</text>
<text x="38.5" y="444.0" font-size="10.2" text-anchor="end">75</text>
<text x="38.5" y="425.0" font-size="10.2" text-anchor="end">80</text>
<g clip-path="url(#plot2)">
<defs><clipPath id="plot2"><rect x="40" y="740" width="862" height="22"/></clipPath></defs>
<text x="86.5" y="755.6" font-size="10.2" text-anchor="middle">88 MHz</text>
<text x="167.6" y="755.6" font-size="10.2" text-anchor="middle">90 MHz</text>
<text x="248.6" y="755.6" font-size="10.2" text-anchor="middle">92 MHz</text>
<text x="329.7" y="755.6" font-size="10.2" text-anchor="middle">94 MHz</text>
<text x="410.8" y="755.6" font-size="10.2" text-anchor="middle">96 MHz</text>
<text x="491.9" y="755.6" font-size="10.2" text-anchor="middle">98 MHz</text>
<text x="572.9" y="755.6" font-size="10.2" text-anchor="middle">100 MHz</text>
<text x="654.0" y="755.6" font-size="10.2" text-anchor="middle">102 MHz</text>
<text x="735.1" y="755.6" font-size="10.2" text-anchor="middle">104 MHz</text>
<text x="816.1" y="755.6" font-size="10.2" text-anchor="middle">106 MHz</text>
<text x="897.2" y="755.6" font-size="10.2" text-anchor="middle">108 MHz</text>
</g>
<text transform="translate(21.6,570.5) rotate(-90)" font-size="10.2" text-anchor="middle">dB&micro;V</text>
<path d="M8 761.5H902.5V379" stroke="#8e8e8e" fill="none"/>
</svg>
<svg style="left:749px;top:407px" width="150" height="30" viewBox="749 407 150 30">
<g transform="translate(751.1,411.1) scale(0.6720,0.6571)"><path d="M0 0H78Q87.8 0 87.8 8.2Q87.8 13.4 84.6 15.6Q87.8 17.8 87.8 23Q87.8 31.2 78 31.2H0Z" fill="#1846b0"/><rect x="5" y="6.1" width="38.2" height="19.2" fill="#fff"/><path d="M10 11.2H34.2Q38.7 11.2 38.7 15.65Q38.7 20.1 34.2 20.1H10Z" fill="#1846b0"/><path d="M50 6.1H79.5Q82.6 6.1 82.6 9.2Q82.6 12.3 79.5 12.3H50Z" fill="#fff"/><path d="M50 19.1H79.5Q82.6 19.1 82.6 22.2Q82.6 25.3 79.5 25.3H50Z" fill="#fff"/></g>
<text transform="translate(813.76,424.6) scale(1.539,1)" font-size="18.16" font-weight="bold" fill="#1846b0" stroke="#1846b0" stroke-width="0.51">DEVA</text>
<text transform="translate(815.35,431.7) scale(1.95,1)" font-size="6.01" font-weight="bold" fill="#1846b0" textLength="38.13" lengthAdjust="spacing" stroke="#1846b0" stroke-width="0.18">BROADCAST</text>
<text x="883.5" y="416.3" font-size="7.5" font-weight="bold" fill="#1846b0">&#174;</text>
</svg>
<div style="left:1px;top:918px;width:1264px;height:55px;background:#fff"></div>
<svg style="left:705px;top:924px" width="216" height="41" viewBox="705 924 216 41">
<g transform="translate(707,928.8) scale(1.0000,1.0000)"><path d="M0 0H78Q87.8 0 87.8 8.2Q87.8 13.4 84.6 15.6Q87.8 17.8 87.8 23Q87.8 31.2 78 31.2H0Z" fill="#0038a8"/><rect x="5" y="6.1" width="38.2" height="19.2" fill="#fff"/><path d="M10 11.2H34.2Q38.7 11.2 38.7 15.65Q38.7 20.1 34.2 20.1H10Z" fill="#0038a8"/><path d="M50 6.1H79.5Q82.6 6.1 82.6 9.2Q82.6 12.3 79.5 12.3H50Z" fill="#fff"/><path d="M50 19.1H79.5Q82.6 19.1 82.6 22.2Q82.6 25.3 79.5 25.3H50Z" fill="#fff"/></g>
<text transform="translate(799.79,950.1) scale(1.504,1)" font-size="27.37" font-weight="bold" fill="#0038a8" stroke="#0038a8" stroke-width="0.77">DEVA</text>
<text transform="translate(802.13,959.6) scale(1.95,1)" font-size="7.54" font-weight="bold" fill="#0038a8" textLength="56.35" lengthAdjust="spacing" stroke="#0038a8" stroke-width="0.23">BROADCAST</text>
<text x="903.5" y="938.2" font-size="10.5" font-weight="bold" fill="#0038a8">&#174;</text>
</svg>
<svg style="left:907px;top:385px" width="9" height="6" viewBox="0 0 9 6"><path d="M1.2 5.4L4.5 1.9L7.8 5.4" fill="none" stroke="#505050" stroke-width="2"/></svg>
<svg style="left:907px;top:750px" width="9" height="6" viewBox="0 0 9 6"><path d="M1.2 0.6L4.5 4.1L7.8 0.6" fill="none" stroke="#505050" stroke-width="2"/></svg>
<div style="left:904px;top:534px;width:15px;height:69px;background:#cdcdcd"></div>
<svg style="left:12px;top:766px" width="6" height="9" viewBox="0 0 6 9"><path d="M5.4 1.2L1.9 4.5L5.4 7.8" fill="none" stroke="#505050" stroke-width="2"/></svg>
<svg style="left:909px;top:766px" width="6" height="9" viewBox="0 0 6 9"><path d="M0.6 1.2L4.1 4.5L0.6 7.8" fill="none" stroke="#505050" stroke-width="2"/></svg>
<div style="left:372.5px;top:763px;width:173px;height:15px;background:#cdcdcd"></div>
<div style="left:920px;top:379px;width:16px;height:16px;background:#d2d2d2"></div>
<svg style="left:922px;top:382px" width="12" height="10" viewBox="0 0 12 10"><path d="M1.8 1.8L5.2 5.3L1.8 8.8M6.6 1.8L10 5.3L6.6 8.8" fill="none" stroke="#8a8a8a" stroke-width="1.3"/></svg>
<div style="left:936px;top:379px;width:122px;height:398px;border:1px solid #808080;background:#f0f0f0"></div>
<div style="left:937px;top:624px;width:122px;height:154px;background:#a0a0a4"></div>
<div class="hdr" style="left:937px;top:380px;width:122px;height:17px;"></div>
<svg style="left:945.5px;top:384px" width="9" height="10" viewBox="0 0 9 10"><path d="M0.7 0.6L4 3.9L7.3 0.6M0.7 5L4 8.3L7.3 5" fill="none" stroke="#111" stroke-width="1.6"/></svg>
<div class="t" style="left:962.5px;top:381.0px;font-size:11px;line-height:14px;transform-origin:0 50%;transform:scaleX(0.951);">Markers</div>
<div class="hdr" style="left:937px;top:442px;width:122px;height:16px;"></div>
<svg style="left:945.5px;top:446px" width="9" height="10" viewBox="0 0 9 10"><path d="M0.7 0.6L4 3.9L7.3 0.6M0.7 5L4 8.3L7.3 5" fill="none" stroke="#111" stroke-width="1.6"/></svg>
<div class="t" style="left:962.5px;top:442.5px;font-size:11px;line-height:14px;transform-origin:0 50%;transform:scaleX(0.938);">Band</div>
<div class="hdr" style="left:937px;top:523px;width:122px;height:17px;"></div>
<svg style="left:945.5px;top:527px" width="9" height="10" viewBox="0 0 9 10"><path d="M0.7 0.6L4 3.9L7.3 0.6M0.7 5L4 8.3L7.3 5" fill="none" stroke="#111" stroke-width="1.6"/></svg>
<div class="t" style="left:962.5px;top:524.0px;font-size:11px;line-height:14px;transform-origin:0 50%;transform:scaleX(0.940);">Balloons</div>
<div class="hdr" style="left:937px;top:601px;width:122px;height:17px;"></div>
<svg style="left:945px;top:605.5px" width="10" height="9" viewBox="0 0 10 9"><path d="M0.6 0.7L3.9 4L0.6 7.3M5 0.7L8.3 4L5 7.3" fill="none" stroke="#111" stroke-width="1.6"/></svg>
<div class="t" style="left:962.5px;top:602.0px;font-size:11px;line-height:14px;transform-origin:0 50%;transform:scaleX(0.958);">Zoom</div>
<div style="left:943px;top:402px;width:14px;height:14px;border:1px solid #c8c8c8;background:#e4e4e4"></div>
<div style="left:946px;top:405px;width:10px;height:10px;background:#800000"></div>
<div style="left:943px;top:421px;width:14px;height:14px;border:1px solid #c8c8c8;background:#e4e4e4"></div>
<div style="left:946px;top:424px;width:10px;height:10px;background:#008000"></div>
<div style="left:966px;top:403px;width:13px;height:13px"><svg width="13" height="13" viewBox="0 0 13 13" style="position:absolute;left:0;top:0"><rect x="0.5" y="0.5" width="12" height="12" fill="#fff" stroke="#333"/><path d="M2.8 6.6 L5.3 9.2 L10.2 3.6" fill="none" stroke="#333" stroke-width="1.2"/></svg></div>
<div class="t" style="left:981.5px;top:402.8px;font-size:11px;line-height:14px;transform-origin:0 50%;transform:scaleX(0.878);">MKR</div>
<div style="left:966px;top:422px;width:13px;height:13px"><svg width="13" height="13" viewBox="0 0 13 13" style="position:absolute;left:0;top:0"><rect x="0.5" y="0.5" width="12" height="12" fill="#fff" stroke="#333"/><path d="M2.8 6.6 L5.3 9.2 L10.2 3.6" fill="none" stroke="#333" stroke-width="1.2"/></svg></div>
<div class="t" style="left:981.5px;top:421.8px;font-size:11px;line-height:14px;transform-origin:0 50%;transform:scaleX(0.839);">REF</div>
<div style="left:942px;top:465px;width:13px;height:13px"><svg width="13" height="13" viewBox="0 0 13 13" style="position:absolute;left:0;top:0"><circle cx="6.5" cy="6.5" r="6" fill="#fff" stroke="#333"/></svg></div>
<div class="t" style="left:957.5px;top:464.8px;font-size:11px;line-height:14px;transform-origin:0 50%;transform:scaleX(0.930);">Raw</div>
<div style="left:942px;top:484px;width:13px;height:13px"><svg width="13" height="13" viewBox="0 0 13 13" style="position:absolute;left:0;top:0"><circle cx="6.5" cy="6.5" r="6" fill="#fff" stroke="#333"/><circle cx="6.5" cy="6.5" r="3" fill="#333"/></svg></div>
<div class="t" style="left:957.5px;top:483.8px;font-size:11px;line-height:14px;transform-origin:0 50%;transform:scaleX(0.965);">Smooth</div>
<div style="left:942px;top:503px;width:13px;height:13px"><svg width="13" height="13" viewBox="0 0 13 13" style="position:absolute;left:0;top:0"><rect x="0.5" y="0.5" width="12" height="12" fill="#fff" stroke="#333"/><path d="M2.8 6.6 L5.3 9.2 L10.2 3.6" fill="none" stroke="#333" stroke-width="1.2"/></svg></div>
<div class="t" style="left:957.5px;top:502.8px;font-size:11px;line-height:14px;transform-origin:0 50%;transform:scaleX(0.932);">Fill</div>
<div style="left:977px;top:499px;width:56px;height:19px;border:1px solid #7a7a7a;background:#fff"></div>
<div class="t" style="right:252px;top:502.5px;font-size:11px;line-height:14px;transform-origin:100% 50%;transform:scaleX(1.029);">50 %</div>
<div style="left:1017px;top:501px;width:15px;height:8px;background:#e6e6e6;border:1px solid #c4c4c4;width:13px;height:6px"></div>
<div style="left:1017px;top:510px;width:15px;height:8px;background:#e6e6e6;border:1px solid #c4c4c4;width:13px;height:6px"></div>
<svg style="left:1021px;top:503px" width="7" height="14" viewBox="0 0 7 14"><path d="M0.5 4L3.5 0.8L6.5 4Z M0.5 10L3.5 13.2L6.5 10Z" fill="#222"/></svg>
<div style="left:942px;top:546px;width:13px;height:13px"><svg width="13" height="13" viewBox="0 0 13 13" style="position:absolute;left:0;top:0"><rect x="0.5" y="0.5" width="12" height="12" fill="#fff" stroke="#333"/><path d="M2.8 6.6 L5.3 9.2 L10.2 3.6" fill="none" stroke="#333" stroke-width="1.2"/></svg></div>
<div class="t" style="left:957.5px;top:545.8px;font-size:11px;line-height:14px;transform-origin:0 50%;transform:scaleX(0.950);">PI / CALL</div>
<div style="left:942px;top:565px;width:13px;height:13px"><svg width="13" height="13" viewBox="0 0 13 13" style="position:absolute;left:0;top:0"><rect x="0.5" y="0.5" width="12" height="12" fill="#fff" stroke="#333"/><path d="M2.8 6.6 L5.3 9.2 L10.2 3.6" fill="none" stroke="#333" stroke-width="1.2"/></svg></div>
<div class="t" style="left:957.5px;top:564.8px;font-size:11px;line-height:14px;transform-origin:0 50%;transform:scaleX(0.818);">PS</div>
<div style="left:942px;top:584px;width:13px;height:13px"><svg width="13" height="13" viewBox="0 0 13 13" style="position:absolute;left:0;top:0"><rect x="0.5" y="0.5" width="12" height="12" fill="#fff" stroke="#333"/></svg></div>
<div class="t" style="left:957.5px;top:583.8px;font-size:11px;line-height:14px;transform-origin:0 50%;transform:scaleX(0.938);">Level</div>
<div style="left:942px;top:621px;width:111px;height:1px;background:#b4b4b4"></div>
<div style="left:942px;top:622px;width:111px;height:1px;background:#fff"></div>
<div style="left:1062.5px;top:388.5px;width:194px;height:386px;border:1px solid #dcdcdc;"></div>
<div style="left:1063.5px;top:389.5px;width:192px;height:384px;border:1px solid #fdfdfd;"></div>
<div style="left:1067px;top:382px;width:30px;height:13px;background:#f0f0f0"></div>
<div class="t" style="left:1069.5px;top:382.0px;font-size:11px;line-height:14px;transform-origin:0 50%;transform:scaleX(0.928);">Bands</div>
<div style="left:1066px;top:398px;width:186px;height:319px;border:1px solid #6d6d6d;background:#fff"></div>
<div style="left:1072px;top:403px;width:13px;height:13px"><svg width="13" height="13" viewBox="0 0 13 13" style="position:absolute;left:0;top:0"><rect x="0.5" y="0.5" width="12" height="12" fill="#fff" stroke="#333"/><path d="M2.8 6.6 L5.3 9.2 L10.2 3.6" fill="none" stroke="#333" stroke-width="1.2"/></svg></div>
<div class="t" style="left:1089.5px;top:403.0px;font-size:11px;line-height:14px;transform-origin:0 50%;transform:scaleX(0.951);">Band Name</div>
<div style="left:1187px;top:400px;width:1px;height:18px;background:#e5e5e5"></div>
<div style="left:1227px;top:400px;width:1px;height:18px;background:#e5e5e5"></div>
<div class="t" style="left:1193.5px;top:403.0px;font-size:11px;line-height:14px;transform-origin:0 50%;transform:scaleX(0.938);">Color</div>
<div style="left:1068px;top:419px;width:119px;height:17px;background:#ffffe1"></div>
<div style="left:1068px;top:437px;width:183px;height:17px;background:#bfcddb"></div>
<div style="left:1074px;top:421px;width:13px;height:13px"><svg width="13" height="13" viewBox="0 0 13 13" style="position:absolute;left:0;top:0"><rect x="0.5" y="0.5" width="12" height="12" fill="#fff" stroke="#333"/><path d="M2.8 6.6 L5.3 9.2 L10.2 3.6" fill="none" stroke="#333" stroke-width="1.2"/></svg></div>
<div class="t" style="left:1092.5px;top:420.5px;font-size:11px;line-height:14px;transform-origin:0 50%;transform:scaleX(0.947);">BandScan_20_A...</div>
<div style="left:1074px;top:439px;width:13px;height:13px"><svg width="13" height="13" viewBox="0 0 13 13" style="position:absolute;left:0;top:0"><rect x="0.5" y="0.5" width="12" height="12" fill="#fff" stroke="#333"/><path d="M2.8 6.6 L5.3 9.2 L10.2 3.6" fill="none" stroke="#333" stroke-width="1.2"/></svg></div>
<div class="t" style="left:1092.5px;top:438.5px;font-size:11px;line-height:14px;transform-origin:0 50%;transform:scaleX(0.953);">BandScan_2510...</div>
<div style="left:1188px;top:419px;width:39px;height:17px;background:#ff0000"></div>
<div style="left:1188px;top:437px;width:39px;height:17px;background:#0000ff"></div>
<div style="left:1067px;top:722px;width:55px;height:21px;border:1px solid #adadad;background:#e1e1e1;"><svg style="left:5px;top:4px" width="14" height="14" viewBox="0 0 14 14"><path d="M5 0.8H9V5H13.2V9H9V13.2H5V9H0.8V5H5Z" fill="#4cc046" stroke="#2f9a2c" stroke-width="0.9"/></svg></div>
<div class="t" style="left:1096.5px;top:726.8px;font-size:11px;line-height:14px;transform-origin:0 50%;transform:scaleX(0.944);">Add</div>
<div style="left:1131px;top:722px;width:55px;height:21px;border:1px solid #adadad;background:#e1e1e1;"><svg style="left:5px;top:4px" width="14" height="14" viewBox="0 0 14 14"><path d="M2 2L12 12M12 2L2 12" stroke="#f0452a" stroke-width="3" stroke-linecap="round"/><path d="M2.3 2.3L11.7 11.7M11.7 2.3L2.3 11.7" stroke="#ff9278" stroke-width="0.9" stroke-linecap="round"/></svg></div>
<div class="t" style="left:1161.5px;top:726.8px;font-size:11px;line-height:14px;transform-origin:0 50%;transform:scaleX(0.941);">Del</div>
<div style="left:1195px;top:722px;width:55px;height:21px;border:1px solid #adadad;background:#e1e1e1;"><svg style="left:5px;top:3px" width="13" height="16" viewBox="0 0 13 16"><path d="M1.5 4H11.5L10.6 15H2.4Z" fill="#a8a8a8" stroke="#777" stroke-width="0.8"/><rect x="0.7" y="2.2" width="11.6" height="2" rx="0.8" fill="#bdbdbd" stroke="#777" stroke-width="0.7"/><rect x="4.7" y="0.6" width="3.6" height="1.6" fill="#999" stroke="#777" stroke-width="0.5"/><path d="M4.2 6V13.4M6.5 6V13.4M8.8 6V13.4" stroke="#7d7d7d" stroke-width="0.9"/></svg></div>
<div class="t" style="left:1221px;top:726.8px;font-size:11px;line-height:14px;transform-origin:0 50%;transform:scaleX(0.924);">Clear</div>
<div style="left:1067px;top:749px;width:55px;height:21px;border:1px solid #adadad;background:#e1e1e1;"><svg style="left:3px;top:3px" width="17" height="17" viewBox="0 0 17 17"><path d="M8.5 0.8L16.2 8.6H12.3V16.2H4.7V8.6H0.8Z" fill="#4f8ae8" stroke="#2a5fc4" stroke-width="0.9"/><path d="M8.5 2.4L13.6 7.6H11.3V15.2H9.8V6.2Z" fill="#8db6f6" opacity="0.7"/></svg></div>
<div class="t" style="left:1099px;top:753.8px;font-size:11px;line-height:14px;transform-origin:0 50%;transform:scaleX(0.932);">Up</div>
<div style="left:1131px;top:749px;width:55px;height:21px;border:1px solid #adadad;background:#e1e1e1;"><svg style="left:3px;top:3px" width="17" height="17" viewBox="0 0 17 17"><path d="M8.5 16.2L16.2 8.4H12.3V0.8H4.7V8.4H0.8Z" fill="#4f8ae8" stroke="#2a5fc4" stroke-width="0.9"/><path d="M6 1.8H7.6V10H5.4L8.5 14.2L3.4 9.4H6Z" fill="#8db6f6" opacity="0.7"/></svg></div>
<div class="t" style="left:1156px;top:753.8px;font-size:11px;line-height:14px;transform-origin:0 50%;transform:scaleX(0.971);">Down</div>
<div style="left:1195px;top:749px;width:55px;height:21px;border:1px solid #adadad;background:#e1e1e1;"><div style="left:4px;top:3px;width:15px;height:15px;background:#0000ff"></div></div>
<div class="t" style="left:1218px;top:753.8px;font-size:11px;line-height:14px;transform-origin:0 50%;transform:scaleX(0.938);">Color</div>
<svg style="left:0;top:780px" width="1266" height="2" viewBox="0 0 1266 2"><path d="M8 0.6H1258" stroke="#111" stroke-width="1.4" stroke-dasharray="3 3" stroke-dashoffset="-3"/></svg>
<div style="left:7px;top:782px;width:1053px;height:103px;border:1px solid #6d6d6d;background:#fff;overflow:hidden"></div>
<div style="left:9px;top:803px;width:1035px;height:18px;background:#ffffe1"></div>
<div style="left:9px;top:839px;width:1035px;height:18px;background:#ffffe1"></div>
<div style="left:9px;top:875px;width:1035px;height:11px;background:#ffffe1"></div>
<div style="left:97px;top:783px;width:1px;height:19px;background:#e5e5e5"></div>
<div style="left:177px;top:783px;width:1px;height:19px;background:#e5e5e5"></div>
<div style="left:257px;top:783px;width:1px;height:19px;background:#e5e5e5"></div>
<div style="left:337px;top:783px;width:1px;height:19px;background:#e5e5e5"></div>
<div style="left:438px;top:783px;width:1px;height:19px;background:#e5e5e5"></div>
<div style="left:518px;top:783px;width:1px;height:19px;background:#e5e5e5"></div>
<div style="left:717px;top:783px;width:1px;height:19px;background:#e5e5e5"></div>
<div style="left:1043px;top:783px;width:1px;height:19px;background:#e5e5e5"></div>
<div class="t" style="left:14.5px;top:786.8px;font-size:11px;line-height:14px;transform-origin:0 50%;transform:scaleX(0.939);">Freq</div>
<div class="t" style="left:103px;top:786.8px;font-size:11px;line-height:14px;transform-origin:0 50%;transform:scaleX(0.919);">RF Level</div>
<div class="t" style="left:183px;top:786.8px;font-size:11px;line-height:14px;transform-origin:0 50%;transform:scaleX(0.942);">Mode</div>
<div class="t" style="left:263.5px;top:786.8px;font-size:11px;line-height:14px;transform-origin:0 50%;transform:scaleX(0.963);">PI</div>
<div class="t" style="left:343.5px;top:786.8px;font-size:11px;line-height:14px;transform-origin:0 50%;transform:scaleX(0.867);">PTY</div>
<div class="t" style="left:443.7px;top:786.8px;font-size:11px;line-height:14px;transform-origin:0 50%;transform:scaleX(0.818);">PS</div>
<div class="t" style="left:523.6px;top:786.8px;font-size:11px;line-height:14px;transform-origin:0 50%;transform:scaleX(0.903);">RT</div>
<div class="t" style="left:724.5px;top:786.8px;font-size:11px;line-height:14px;transform-origin:0 50%;transform:scaleX(0.864);">AF</div>
<svg style="left:41px;top:790px" width="10" height="6" viewBox="0 0 10 6"><path d="M0.3 5.5L5 0.5L9.7 5.5Z" fill="#858585"/></svg>
<div style="left:8px;top:784px;width:1052px;height:102px;overflow:hidden">
<div class="t" style="right:972.5px;top:20.600000000000023px;transform-origin:100% 50%;transform:scaleX(0.955)">91.10 MHz</div>
<div class="t" style="right:897.2px;top:20.600000000000023px;transform-origin:100% 50%;transform:scaleX(0.959)">41.00 dB&micro;V</div>
<div class="t" style="left:178.8px;top:20.600000000000023px;transform-origin:0 50%;transform:scaleX(0.951)">Mono</div>
<div class="t" style="left:439.5px;top:20.600000000000023px;transform-origin:0 50%;transform:scaleX(0.886)">POWER FM</div>
<div class="t" style="left:520px;top:20.600000000000023px;transform-origin:0 50%;transform:scaleX(0.938)">[A] POWER FM - TODAY'S BEST MU...</div>
<div class="t" style="left:720px;top:20.600000000000023px;transform-origin:0 50%;transform:scaleX(0.987)">4A, 91.1,88.0,90.4,106.8</div>
<div class="t" style="right:972.5px;top:38.60000000000002px;transform-origin:100% 50%;transform:scaleX(0.955)">94.80 MHz</div>
<div class="t" style="right:897.2px;top:38.60000000000002px;transform-origin:100% 50%;transform:scaleX(0.959)">34.00 dB&micro;V</div>
<div class="t" style="left:178.8px;top:38.60000000000002px;transform-origin:0 50%;transform:scaleX(0.951)">Mono</div>
<div class="t" style="left:260.3px;top:38.60000000000002px;transform-origin:0 50%;transform:scaleX(1.074)">----</div>
<div class="t" style="left:720px;top:38.60000000000002px;transform-origin:0 50%;transform:scaleX(0.928)">No AFs</div>
<div class="t" style="right:972.5px;top:56.60000000000002px;transform-origin:100% 50%;transform:scaleX(0.955)">95.70 MHz</div>
<div class="t" style="right:897.2px;top:56.60000000000002px;transform-origin:100% 50%;transform:scaleX(0.959)">33.00 dB&micro;V</div>
<div class="t" style="left:178.8px;top:56.60000000000002px;transform-origin:0 50%;transform:scaleX(0.951)">Mono</div>
<div class="t" style="left:260.3px;top:56.60000000000002px;transform-origin:0 50%;transform:scaleX(1.074)">----</div>
<div class="t" style="left:720px;top:56.60000000000002px;transform-origin:0 50%;transform:scaleX(0.928)">No AFs</div>
<div class="t" style="right:972.5px;top:74.60000000000002px;transform-origin:100% 50%;transform:scaleX(0.955)">96.70 MHz</div>
<div class="t" style="right:897.2px;top:74.60000000000002px;transform-origin:100% 50%;transform:scaleX(0.959)">33.00 dB&micro;V</div>
<div class="t" style="left:178.8px;top:74.60000000000002px;transform-origin:0 50%;transform:scaleX(0.951)">Mono</div>
<div class="t" style="left:439.5px;top:74.60000000000002px;transform-origin:0 50%;transform:scaleX(1.011)">VI</div>
<div class="t" style="left:720px;top:74.60000000000002px;transform-origin:0 50%;transform:scaleX(0.928)">No AFs</div>
<div class="t" style="right:972.5px;top:92.60000000000002px;transform-origin:100% 50%;transform:scaleX(0.955)">98.30 MHz</div>
<div class="t" style="right:897.2px;top:92.60000000000002px;transform-origin:100% 50%;transform:scaleX(0.959)">41.00 dB&micro;V</div>
<div class="t" style="left:178.8px;top:92.60000000000002px;transform-origin:0 50%;transform:scaleX(0.951)">Mono</div>
<div class="t" style="left:439.5px;top:92.60000000000002px;transform-origin:0 50%;transform:scaleX(0.959)">&nbsp; NA</div>
<div class="t" style="left:520px;top:92.60000000000002px;transform-origin:0 50%;transform:scaleX(1.037)">[A] &nbsp; &nbsp; &nbsp; &nbsp;A BU</div>
<div class="t" style="left:720px;top:92.60000000000002px;transform-origin:0 50%;transform:scaleX(0.928)">No AFs</div>
</div>
<div style="left:1044px;top:803px;width:16px;height:82px;background:#f0f0f0"></div>
<div style="left:1045px;top:820.5px;width:14px;height:16px;background:#cdcdcd"></div>
<svg style="left:1047.5px;top:808px" width="9" height="6" viewBox="0 0 9 6"><path d="M0.8 5.2L4.5 1.3L8.2 5.2" fill="none" stroke="#555" stroke-width="1.5"/></svg>
<svg style="left:1047.5px;top:874px" width="9" height="6" viewBox="0 0 9 6"><path d="M0.8 0.8L4.5 4.7L8.2 0.8" fill="none" stroke="#555" stroke-width="1.5"/></svg>
<div style="left:8px;top:888.5px;width:144px;height:20px;border:1px solid #adadad;background:#e1e1e1;"><svg width="15" height="15" viewBox="0 0 15 15" style="position:absolute;left:4px;top:2.5px"><path d="M1.5 0.5 H13.5 Q14.5 0.5 14.5 1.5 V13.5 Q14.5 14.5 13.5 14.5 H1.5 Q0.5 14.5 0.5 13.5 V1.5 Q0.5 0.5 1.5 0.5Z" fill="#3f74e6" stroke="#2a55c8"/><rect x="3" y="1" width="9" height="5.5" fill="#f4f8ff"/><rect x="3.5" y="9" width="8" height="5.5" fill="#dfe6f3"/><rect x="4.5" y="10" width="2.5" height="4" fill="#2f5fd0"/></svg></div>
<div class="t" style="left:33px;top:892.8px;font-size:11px;line-height:14px;transform-origin:0 50%;transform:scaleX(0.942);">Save Selected as Preset</div>
<div style="left:989px;top:888.5px;width:71px;height:20px;border:1px solid #adadad;background:#e1e1e1;"><svg width="15" height="15" viewBox="0 0 15 15" style="position:absolute;left:5px;top:2.5px"><path d="M1.5 0.5 H13.5 Q14.5 0.5 14.5 1.5 V13.5 Q14.5 14.5 13.5 14.5 H1.5 Q0.5 14.5 0.5 13.5 V1.5 Q0.5 0.5 1.5 0.5Z" fill="#3f74e6" stroke="#2a55c8"/><rect x="3" y="1" width="9" height="5.5" fill="#f4f8ff"/><rect x="3.5" y="9" width="8" height="5.5" fill="#dfe6f3"/><rect x="4.5" y="10" width="2.5" height="4" fill="#2f5fd0"/></svg></div>
<div class="t" style="left:1020.5px;top:892.8px;font-size:11px;line-height:14px;transform-origin:0 50%;transform:scaleX(0.970);">Export</div>
<div style="left:1066px;top:785px;width:191px;height:123px;border:1px solid #9a9a9a;background:#fff"></div>
<div class="t" style="left:1068.5px;top:787.3px;font-size:11px;line-height:14px;transform-origin:0 50%;transform:scaleX(0.962);">Date</div>
<div class="t" style="left:1129px;top:787.3px;font-size:11px;line-height:14px;transform-origin:0 50%;transform:scaleX(0.981);">25-10-2016</div>
<div style="left:1067px;top:802px;width:190px;height:1px;background:#f0f0f0"></div>
<div class="t" style="left:1068.5px;top:804.3px;font-size:11px;line-height:14px;transform-origin:0 50%;transform:scaleX(0.982);">Time</div>
<div class="t" style="left:1129px;top:804.3px;font-size:11px;line-height:14px;transform-origin:0 50%;transform:scaleX(1.008);">10:54:48</div>
<div style="left:1067px;top:819px;width:190px;height:1px;background:#f0f0f0"></div>
<div class="t" style="left:1068.5px;top:821.3px;font-size:11px;line-height:14px;transform-origin:0 50%;transform:scaleX(0.984);">Start</div>
<div class="t" style="left:1129px;top:821.3px;font-size:11px;line-height:14px;transform-origin:0 50%;transform:scaleX(0.942);">87 MHz</div>
<div style="left:1067px;top:836px;width:190px;height:1px;background:#f0f0f0"></div>
<div class="t" style="left:1068.5px;top:838.3px;font-size:11px;line-height:14px;transform-origin:0 50%;transform:scaleX(0.951);">Stop</div>
<div class="t" style="left:1129px;top:838.3px;font-size:11px;line-height:14px;transform-origin:0 50%;transform:scaleX(0.955);">107.9 MHz</div>
<div style="left:1067px;top:853px;width:190px;height:1px;background:#f0f0f0"></div>
<div class="t" style="left:1068.5px;top:855.3px;font-size:11px;line-height:14px;transform-origin:0 50%;transform:scaleX(0.943);">Step</div>
<div class="t" style="left:1129px;top:855.3px;font-size:11px;line-height:14px;transform-origin:0 50%;transform:scaleX(0.956);">50 kHz</div>
<div style="left:1067px;top:870px;width:190px;height:1px;background:#f0f0f0"></div>
<div class="t" style="left:1068.5px;top:872.3px;font-size:11px;line-height:14px;transform-origin:0 50%;transform:scaleX(0.962);">Lat</div>
<div class="t" style="left:1129px;top:872.3px;font-size:11px;line-height:14px;transform-origin:0 50%;transform:scaleX(1.025);">0&deg;0'0"</div>
<div style="left:1067px;top:887px;width:190px;height:1px;background:#f0f0f0"></div>
<div class="t" style="left:1068.5px;top:889.3px;font-size:11px;line-height:14px;transform-origin:0 50%;transform:scaleX(0.944);">Lon</div>
<div class="t" style="left:1129px;top:889.3px;font-size:11px;line-height:14px;transform-origin:0 50%;transform:scaleX(1.025);">0&deg;0'0"</div>
<div style="left:1067px;top:904px;width:190px;height:1px;background:#f0f0f0"></div>
<div style="left:1126px;top:786px;width:1px;height:122px;background:#f0f0f0"></div>
<div style="left:5px;top:920px;width:236px;height:52px;background:#000"></div>
<svg style="left:0;top:915px" width="250" height="60" viewBox="0 915 250 60">
<g transform="translate(42.0,922.1) skewX(-4.6)"><polygon points="1.4,0.0 20.2,0.0 15.6,5.3 6.0,5.3" fill="#4b4200"/><polygon points="21.6,1.4 21.6,18.9 16.3,16.1 16.3,6.0" fill="#4b4200"/><polygon points="21.6,19.8 21.6,37.1 16.3,32.5 16.3,22.6" fill="#4b4200"/><polygon points="6.0,33.3 15.6,33.3 20.2,38.6 1.4,38.6" fill="#4b4200"/><polygon points="0.0,19.8 5.3,22.6 5.3,32.5 0.0,37.1" fill="#4b4200"/><polygon points="0.0,1.4 5.3,6.0 5.3,16.1 0.0,18.9" fill="#4b4200"/><polygon points="1.4,19.3 5.5,16.8 16.1,16.8 20.2,19.3 16.1,21.8 5.5,21.8" fill="#4b4200"/></g>
<g transform="translate(68.0,922.1) skewX(-4.6)"><polygon points="1.4,0.0 20.2,0.0 15.6,5.3 6.0,5.3" fill="#ffe800"/><polygon points="21.6,1.4 21.6,18.9 16.3,16.1 16.3,6.0" fill="#ffe800"/><polygon points="21.6,19.8 21.6,37.1 16.3,32.5 16.3,22.6" fill="#ffe800"/><polygon points="6.0,33.3 15.6,33.3 20.2,38.6 1.4,38.6" fill="#ffe800"/><polygon points="0.0,19.8 5.3,22.6 5.3,32.5 0.0,37.1" fill="#4b4200"/><polygon points="0.0,1.4 5.3,6.0 5.3,16.1 0.0,18.9" fill="#ffe800"/><polygon points="1.4,19.3 5.5,16.8 16.1,16.8 20.2,19.3 16.1,21.8 5.5,21.8" fill="#ffe800"/></g>
<g transform="translate(93.8,922.1) skewX(-4.6)"><polygon points="1.4,0.0 20.2,0.0 15.6,5.3 6.0,5.3" fill="#4b4200"/><polygon points="21.6,1.4 21.6,18.9 16.3,16.1 16.3,6.0" fill="#ffe800"/><polygon points="21.6,19.8 21.6,37.1 16.3,32.5 16.3,22.6" fill="#ffe800"/><polygon points="6.0,33.3 15.6,33.3 20.2,38.6 1.4,38.6" fill="#4b4200"/><polygon points="0.0,19.8 5.3,22.6 5.3,32.5 0.0,37.1" fill="#4b4200"/><polygon points="0.0,1.4 5.3,6.0 5.3,16.1 0.0,18.9" fill="#4b4200"/><polygon points="1.4,19.3 5.5,16.8 16.1,16.8 20.2,19.3 16.1,21.8 5.5,21.8" fill="#4b4200"/></g>
<g transform="translate(125.8,922.1) skewX(-4.6)"><polygon points="1.4,0.0 20.2,0.0 15.6,5.3 6.0,5.3" fill="#4b4200"/><polygon points="21.6,1.4 21.6,18.9 16.3,16.1 16.3,6.0" fill="#ffe800"/><polygon points="21.6,19.8 21.6,37.1 16.3,32.5 16.3,22.6" fill="#ffe800"/><polygon points="6.0,33.3 15.6,33.3 20.2,38.6 1.4,38.6" fill="#4b4200"/><polygon points="0.0,19.8 5.3,22.6 5.3,32.5 0.0,37.1" fill="#4b4200"/><polygon points="0.0,1.4 5.3,6.0 5.3,16.1 0.0,18.9" fill="#4b4200"/><polygon points="1.4,19.3 5.5,16.8 16.1,16.8 20.2,19.3 16.1,21.8 5.5,21.8" fill="#4b4200"/></g>
<g transform="translate(151.7,922.1) skewX(-4.6)"><polygon points="1.4,0.0 20.2,0.0 15.6,5.3 6.0,5.3" fill="#ffe800"/><polygon points="21.6,1.4 21.6,18.9 16.3,16.1 16.3,6.0" fill="#ffe800"/><polygon points="21.6,19.8 21.6,37.1 16.3,32.5 16.3,22.6" fill="#ffe800"/><polygon points="6.0,33.3 15.6,33.3 20.2,38.6 1.4,38.6" fill="#ffe800"/><polygon points="0.0,19.8 5.3,22.6 5.3,32.5 0.0,37.1" fill="#ffe800"/><polygon points="0.0,1.4 5.3,6.0 5.3,16.1 0.0,18.9" fill="#ffe800"/><polygon points="1.4,19.3 5.5,16.8 16.1,16.8 20.2,19.3 16.1,21.8 5.5,21.8" fill="#4b4200"/></g>
<rect x="116.3" y="955.3" width="5.6" height="5.4" fill="#ffe800"/>
<defs><linearGradient id="bg1" x1="0" y1="0" x2="0" y2="1"><stop offset="0" stop-color="#a9a9a9"/><stop offset="0.5" stop-color="#8e8e8e"/><stop offset="1" stop-color="#6c6c6c"/></linearGradient><linearGradient id="tg" x1="0" y1="0" x2="0" y2="1"><stop offset="0" stop-color="#e6e6e6"/><stop offset="0.55" stop-color="#d0d0d0"/><stop offset="1" stop-color="#7c7c7c"/></linearGradient></defs>
<polygon points="11,922 28,922 32,926 32,940 28,944 11,944 7,940 7,926" fill="url(#bg1)"/><polygon points="11,933.0 27.5,925.5 27.5,940" fill="url(#tg)"/>
<polygon points="11,948 28,948 32,952 32,966 28,970 11,970 7,966 7,952" fill="url(#bg1)"/><polygon points="10.5,959.0 20.5,953 20.5,965" fill="url(#tg)"/><polygon points="18,959.0 28,953 28,965" fill="url(#tg)"/>
<polygon points="218,922 235,922 239,926 239,940 235,944 218,944 214,940 214,926" fill="url(#bg1)"/><polygon points="235,933.0 218.5,925.5 218.5,940" fill="url(#tg)"/>
<polygon points="218,948 235,948 239,952 239,966 235,970 218,970 214,966 214,952" fill="url(#bg1)"/><polygon points="235.5,959.0 225.5,953 225.5,965" fill="url(#tg)"/><polygon points="228,959.0 218,953 218,965" fill="url(#tg)"/>
<circle cx="187.4" cy="930.4" r="9.7" fill="#ffe800"/><circle cx="198.6" cy="930.4" r="9.7" fill="#ffe800"/>
<circle cx="187.4" cy="930.4" r="7.0" fill="none" stroke="#000" stroke-width="0.9"/><circle cx="187.4" cy="930.4" r="4.2" fill="none" stroke="#000" stroke-width="0.9"/><circle cx="187.4" cy="930.4" r="1.4" fill="#000"/>
<circle cx="198.6" cy="930.4" r="7.0" fill="none" stroke="#000" stroke-width="0.9"/><circle cx="198.6" cy="930.4" r="4.2" fill="none" stroke="#000" stroke-width="0.9"/><circle cx="198.6" cy="930.4" r="1.4" fill="#000"/>
<path d="M193 921.5Q196 930.4 193 939.3" stroke="#ffe800" stroke-width="2.4" fill="none"/>
<circle cx="187.6" cy="951.4" r="8.5" fill="none" stroke="#ffe800" stroke-width="2"/><circle cx="198.6" cy="951.4" r="8.5" fill="none" stroke="#ffe800" stroke-width="2"/>
<rect x="159.2" y="963" width="3.8" height="7" fill="#ffe800"/>
<rect x="164.2" y="963" width="3.8" height="7" fill="#ffe800"/>
<rect x="169.2" y="963" width="3.8" height="7" fill="#ffe800"/>
<rect x="174.2" y="963" width="3.8" height="7" fill="#ffe800"/>
<rect x="179.2" y="963" width="3.8" height="7" fill="#8f8000"/>
<rect x="184.2" y="963" width="3.8" height="7" fill="#8f8000"/>
<rect x="189.2" y="963" width="3.8" height="7" fill="#8f8000"/>
<rect x="194.2" y="963" width="3.8" height="7" fill="#8f8000"/>
<rect x="199.2" y="963" width="3.8" height="7" fill="#8f8000"/>
<rect x="204.2" y="963" width="3.8" height="7" fill="#8f8000"/>
<rect x="66" y="963" width="16" height="7" fill="#ffe800"/><rect x="108" y="963" width="19" height="7" fill="#ffe800"/>
</svg>
<div class="t" style="left:39px;top:963.6px;font-family:'Liberation Mono',monospace;font-weight:bold;font-size:9px;line-height:8px;color:#ffe800;transform-origin:0 0;transform:scaleX(0.787)">DEEMPH</div>
<div class="t" style="left:67px;top:963.6px;font-family:'Liberation Mono',monospace;font-weight:bold;font-size:9px;line-height:8px;color:#000;transform-origin:0 0;transform:scaleX(0.648)">FLAT</div>
<div class="t" style="left:87.5px;top:963.6px;font-family:'Liberation Mono',monospace;font-weight:bold;font-size:9px;line-height:8px;color:#ffe800;transform-origin:0 0;transform:scaleX(0.880)">IFBW</div>
<div class="t" style="left:109px;top:963.6px;font-family:'Liberation Mono',monospace;font-weight:bold;font-size:9px;line-height:8px;color:#000;transform-origin:0 0;transform:scaleX(0.787)">WIDE</div>
<div class="t" style="left:132.5px;top:963.6px;font-family:'Liberation Mono',monospace;font-weight:bold;font-size:9px;line-height:8px;color:#ffe800;transform-origin:0 0;transform:scaleX(0.661)">QUALITY</div>
<div style="left:247px;top:922px;width:61px;height:19px;border:1px solid #7a7a7a;background:#fff"></div>
<div class="t" style="right:977.5px;top:925.0px;font-size:11px;line-height:14px;transform-origin:100% 50%;transform:scaleX(0.979);">91.10</div>
<div style="left:292px;top:924px;width:13px;height:6px;background:#e6e6e6;border:1px solid #c4c4c4"></div>
<div style="left:292px;top:933px;width:13px;height:6px;background:#e6e6e6;border:1px solid #c4c4c4"></div>
<svg style="left:296px;top:926px" width="7" height="14" viewBox="0 0 7 14"><path d="M0.5 4L3.5 0.8L6.5 4Z M0.5 10L3.5 13.2L6.5 10Z" fill="#222"/></svg>
<div class="t" style="left:313.5px;top:925.0px;font-size:11px;line-height:14px;transform-origin:0 50%;transform:scaleX(0.906);">MHz</div>
<div style="left:340px;top:922px;width:35px;height:18.5px;border:1px solid #adadad;background:#e1e1e1;"></div>
<div class="t" style="left:258.5px;width:200px;text-align:center;top:925.2px;font-size:11px;line-height:14px;transform-origin:50% 50%;transform:scaleX(0.930);">Set</div>
<div style="left:382px;top:921px;width:61.5px;height:19.5px;border:1px solid #5f5f5f;background:#ebebeb;"><svg width="15" height="15" viewBox="0 0 15 15" style="position:absolute;left:3px;top:2.25px"><path d="M1.5 0.5 H13.5 Q14.5 0.5 14.5 1.5 V13.5 Q14.5 14.5 13.5 14.5 H1.5 Q0.5 14.5 0.5 13.5 V1.5 Q0.5 0.5 1.5 0.5Z" fill="#3f74e6" stroke="#2a55c8"/><rect x="3" y="1" width="9" height="5.5" fill="#f4f8ff"/><rect x="3.5" y="9" width="8" height="5.5" fill="#dfe6f3"/><rect x="4.5" y="10" width="2.5" height="4" fill="#2f5fd0"/></svg></div>
<div class="t" style="left:399.0px;width:50px;text-align:center;top:924.8px;font-size:11px;line-height:14px;transform-origin:50% 50%;transform:scaleX(0.979);">91.10</div>
<div style="left:402px;top:924px;width:40px;height:13.5px;border:1px dotted #777"></div>
<div style="left:448px;top:921px;width:61.5px;height:19.5px;border:1px solid #5f5f5f;background:#ebebeb;"><svg width="15" height="15" viewBox="0 0 15 15" style="position:absolute;left:3px;top:2.25px"><path d="M1.5 0.5 H13.5 Q14.5 0.5 14.5 1.5 V13.5 Q14.5 14.5 13.5 14.5 H1.5 Q0.5 14.5 0.5 13.5 V1.5 Q0.5 0.5 1.5 0.5Z" fill="#3f74e6" stroke="#2a55c8"/><rect x="3" y="1" width="9" height="5.5" fill="#f4f8ff"/><rect x="3.5" y="9" width="8" height="5.5" fill="#dfe6f3"/><rect x="4.5" y="10" width="2.5" height="4" fill="#2f5fd0"/></svg></div>
<div class="t" style="left:465.0px;width:50px;text-align:center;top:924.8px;font-size:11px;line-height:14px;transform-origin:50% 50%;transform:scaleX(0.979);">95.70</div>
<div style="left:514px;top:921px;width:61.5px;height:19.5px;border:1px solid #5f5f5f;background:#ebebeb;"><svg width="15" height="15" viewBox="0 0 15 15" style="position:absolute;left:3px;top:2.25px"><path d="M1.5 0.5 H13.5 Q14.5 0.5 14.5 1.5 V13.5 Q14.5 14.5 13.5 14.5 H1.5 Q0.5 14.5 0.5 13.5 V1.5 Q0.5 0.5 1.5 0.5Z" fill="#3f74e6" stroke="#2a55c8"/><rect x="3" y="1" width="9" height="5.5" fill="#f4f8ff"/><rect x="3.5" y="9" width="8" height="5.5" fill="#dfe6f3"/><rect x="4.5" y="10" width="2.5" height="4" fill="#2f5fd0"/></svg></div>
<div class="t" style="left:531.0px;width:50px;text-align:center;top:924.8px;font-size:11px;line-height:14px;transform-origin:50% 50%;transform:scaleX(1.074);">---.--</div>
<div style="left:382px;top:949px;width:61.5px;height:19px;border:1px solid #5f5f5f;background:#ebebeb;"><svg width="15" height="15" viewBox="0 0 15 15" style="position:absolute;left:3px;top:2.0px"><path d="M1.5 0.5 H13.5 Q14.5 0.5 14.5 1.5 V13.5 Q14.5 14.5 13.5 14.5 H1.5 Q0.5 14.5 0.5 13.5 V1.5 Q0.5 0.5 1.5 0.5Z" fill="#3f74e6" stroke="#2a55c8"/><rect x="3" y="1" width="9" height="5.5" fill="#f4f8ff"/><rect x="3.5" y="9" width="8" height="5.5" fill="#dfe6f3"/><rect x="4.5" y="10" width="2.5" height="4" fill="#2f5fd0"/></svg></div>
<div class="t" style="left:399.0px;width:50px;text-align:center;top:952.5px;font-size:11px;line-height:14px;transform-origin:50% 50%;transform:scaleX(0.979);">99.90</div>
<div style="left:448px;top:949px;width:61.5px;height:19px;border:1px solid #5f5f5f;background:#ebebeb;"><svg width="15" height="15" viewBox="0 0 15 15" style="position:absolute;left:3px;top:2.0px"><path d="M1.5 0.5 H13.5 Q14.5 0.5 14.5 1.5 V13.5 Q14.5 14.5 13.5 14.5 H1.5 Q0.5 14.5 0.5 13.5 V1.5 Q0.5 0.5 1.5 0.5Z" fill="#3f74e6" stroke="#2a55c8"/><rect x="3" y="1" width="9" height="5.5" fill="#f4f8ff"/><rect x="3.5" y="9" width="8" height="5.5" fill="#dfe6f3"/><rect x="4.5" y="10" width="2.5" height="4" fill="#2f5fd0"/></svg></div>
<div class="t" style="left:465.0px;width:50px;text-align:center;top:952.5px;font-size:11px;line-height:14px;transform-origin:50% 50%;transform:scaleX(1.074);">---.--</div>
<div class="t" style="left:247px;top:952.5px;font-size:11px;line-height:14px;transform-origin:0 50%;transform:scaleX(0.942);">Region</div>
<div style="left:286.5px;top:949px;width:89px;height:19px;border:1px solid #adadad;background:#e1e1e1;"></div>
<div class="t" style="left:290.0px;top:952.5px;font-size:11px;line-height:14px;transform-origin:0 50%;transform:scaleX(0.939);">General</div>
<svg style="left:362.5px;top:957.0px" width="10" height="6" viewBox="0 0 10 6"><path d="M0.6 0.7L5 5.1L9.4 0.7" fill="none" stroke="#444" stroke-width="1"/></svg>
<div style="left:514px;top:949px;width:61.5px;height:19px;border:1px solid #adadad;background:#e1e1e1;"></div>
<div class="t" style="left:517.5px;top:952.5px;font-size:11px;line-height:14px;transform-origin:0 50%;transform:scaleX(0.951);">More</div>
<svg style="left:562.5px;top:957.0px" width="10" height="6" viewBox="0 0 10 6"><path d="M0.6 0.7L5 5.1L9.4 0.7" fill="none" stroke="#444" stroke-width="1"/></svg>
<div style="left:581px;top:920.5px;width:45px;height:20px;border:1px solid #0078d7;background:#d3e8f8;"></div>
<div style="left:590px;top:925px;width:5px;height:13px;border:1px solid #2a8a10;background:#37e216"></div>
<div class="t" style="left:601px;top:925.0px;font-size:11px;line-height:14px;transform-origin:0 50%;transform:scaleX(0.912);">ANT</div>
<div style="left:581px;top:948.5px;width:45px;height:20px;border:1px solid #adadad;background:#e1e1e1;"></div>
<div style="left:590px;top:953px;width:5px;height:13px;border:1px solid #555;background:#8a8a8a"></div>
<div class="t" style="left:600px;top:953.0px;font-size:11px;line-height:14px;transform-origin:0 50%;transform:scaleX(0.865);">MPX</div>
<div style="left:992px;top:919px;width:50px;height:21px;border:1px solid #adadad;background:#e1e1e1;"><svg style="left:3px;top:3px" width="16" height="16" viewBox="0 0 16 16"><circle cx="8" cy="8" r="7.1" fill="#ececec" stroke="#151515" stroke-width="1.2"/><path d="M6.2 4.4L10.8 8L6.2 11.6Z" fill="#1c9a1c"/></svg></div>
<div class="t" style="left:1018.5px;top:923.8px;font-size:11px;line-height:14px;transform-origin:0 50%;transform:scaleX(0.913);">Play</div>
<svg style="left:1051px;top:922px" width="17" height="17" viewBox="0 0 17 17"><path d="M2.8 5.6H4.6L9.2 1.2Q10.6 8.5 9.2 15.8L4.6 11.4H2.8Z" fill="#f2d600" stroke="#111" stroke-width="1.3" stroke-linejoin="round"/><rect x="1" y="5.6" width="2.2" height="5.8" fill="#111"/><path d="M9.4 5.2Q8 8.5 9.4 11.8" fill="none" stroke="#111" stroke-width="1"/><path d="M12 5.2Q13.4 8.5 12 11.8M14.2 4Q16 8.5 14.2 13" fill="none" stroke="#111" stroke-width="1.1"/></svg>
<div style="left:1073px;top:929px;width:95px;height:3px;border:1px solid #d6d6d6;background:#e7eaea"></div>
<svg style="left:1159px;top:922px" width="11" height="20" viewBox="0 0 11 20"><path d="M0 0.3H11V13.5L5.5 19L0 13.5Z" fill="#0078d7"/></svg>
<div class="t" style="left:1177.5px;top:923.3px;font-size:11px;line-height:14px;transform-origin:0 50%;transform:scaleX(1.017);">100 %</div>
<div style="left:1216px;top:919px;width:44px;height:21px;border:1px solid #adadad;background:#e1e1e1;"><svg style="left:2px;top:3.5px" width="14" height="14" viewBox="0 0 14 14"><circle cx="7" cy="7" r="6" fill="#8a8a8a" stroke="#6a6a6a"/><circle cx="5.5" cy="5.2" r="2.6" fill="#b4b4b4"/></svg></div>
<div class="t" style="left:1235.5px;top:924.0px;font-size:11px;line-height:14px;transform-origin:0 50%;transform:scaleX(0.832);">REC</div>
<div style="left:991px;top:949px;width:135px;height:19px;border:1px solid #adadad;background:#e1e1e1;"></div>
<div class="t" style="left:994.5px;top:952.5px;font-size:11px;line-height:14px;transform-origin:0 50%;transform:scaleX(0.970);">Primary Sound Driver</div>
<svg style="left:1113px;top:957.0px" width="10" height="6" viewBox="0 0 10 6"><path d="M0.6 0.7L5 5.1L9.4 0.7" fill="none" stroke="#444" stroke-width="1"/></svg>
<svg style="left:1138px;top:951px" width="18" height="18" viewBox="0 0 18 18"><path d="M16.49 7.69 L16.49 10.31 L14.45 10.31 L13.77 11.93 L15.22 13.37 L13.37 15.22 L11.93 13.77 L10.31 14.45 L10.31 16.49 L7.69 16.49 L7.69 14.45 L6.07 13.77 L4.63 15.22 L2.78 13.37 L4.23 11.93 L3.55 10.31 L1.51 10.31 L1.51 7.69 L3.55 7.69 L4.23 6.07 L2.78 4.63 L4.63 2.78 L6.07 4.23 L7.69 3.55 L7.69 1.51 L10.31 1.51 L10.31 3.55 L11.93 4.23 L13.37 2.78 L15.22 4.63 L13.77 6.07 L14.45 7.69Z" fill="#f2f2f2" stroke="#444" stroke-width="0.9" stroke-linejoin="round"/><circle cx="9" cy="9" r="2.6" fill="#f4f4f4" stroke="#444" stroke-width="0.9"/></svg>
<div style="left:1135px;top:948px;width:71px;height:20.5px;border:1px solid #adadad;background:#e1e1e1;"></div>
<div class="t" style="left:1162.8px;top:952.8px;font-size:11px;line-height:14px;transform-origin:0 50%;transform:scaleX(0.964);">Settings</div>
<svg style="left:1138px;top:951px" width="18" height="18" viewBox="0 0 18 18"><path d="M16.49 7.69 L16.49 10.31 L14.45 10.31 L13.77 11.93 L15.22 13.37 L13.37 15.22 L11.93 13.77 L10.31 14.45 L10.31 16.49 L7.69 16.49 L7.69 14.45 L6.07 13.77 L4.63 15.22 L2.78 13.37 L4.23 11.93 L3.55 10.31 L1.51 10.31 L1.51 7.69 L3.55 7.69 L4.23 6.07 L2.78 4.63 L4.63 2.78 L6.07 4.23 L7.69 3.55 L7.69 1.51 L10.31 1.51 L10.31 3.55 L11.93 4.23 L13.37 2.78 L15.22 4.63 L13.77 6.07 L14.45 7.69Z" fill="#f2f2f2" stroke="#444" stroke-width="0.9" stroke-linejoin="round"/><circle cx="9" cy="9" r="2.6" fill="#f4f4f4" stroke="#444" stroke-width="0.9"/></svg>
<div style="left:1216px;top:948px;width:44px;height:20.5px;border:1px solid #adadad;background:#e1e1e1;"></div>
<div class="t" style="left:1138.0px;width:200px;text-align:center;top:953.0px;font-size:11px;line-height:14px;transform-origin:50% 50%;transform:scaleX(0.934);">Replay</div>
<div style="left:1px;top:973px;width:1264px;height:1px;background:#d7d7d7"></div>
<div style="left:1px;top:974px;width:1264px;height:19px;background:#f0f0f0"></div>
<div style="left:671px;top:976px;width:1px;height:16px;background:#d7d7d7"></div>
<div style="left:733px;top:976px;width:1px;height:16px;background:#d7d7d7"></div>
<div style="left:881px;top:976px;width:1px;height:16px;background:#d7d7d7"></div>
<div style="left:967px;top:976px;width:1px;height:16px;background:#d7d7d7"></div>
<div style="left:1078px;top:976px;width:1px;height:16px;background:#d7d7d7"></div>
<div style="left:1138px;top:976px;width:1px;height:16px;background:#d7d7d7"></div>
<div class="t" style="left:678px;top:977.7px;font-size:11px;line-height:14px;transform-origin:0 50%;transform:scaleX(1.008);">00:00:25</div>
<div class="t" style="left:740.5px;top:977.7px;font-size:11px;line-height:14px;transform-origin:0 50%;transform:scaleX(0.988);">FW: 1.2.1560&nbsp; 26-06-2017</div>
<div class="t" style="left:888px;top:977.7px;font-size:11px;line-height:14px;transform-origin:0 50%;transform:scaleX(0.909);">SN: BS2N81FC</div>
<div class="t" style="left:975.5px;top:977.7px;font-size:11px;line-height:14px;transform-origin:0 50%;transform:scaleX(0.999);">Ver: 2.1.0.278 x32</div>
<div class="t" style="left:1085px;top:977.7px;font-size:11px;line-height:14px;transform-origin:0 50%;transform:scaleX(0.919);">SSE: Yes</div>
<div class="t" style="left:1145.5px;top:977.7px;font-size:11px;line-height:14px;transform-origin:0 50%;transform:scaleX(0.994);">Cal: 08-17-2023 11:32</div>
<svg style="left:1254px;top:982px" width="10" height="10" viewBox="0 0 10 10"><path d="M7 1H8.5V2.5H7ZM7 4H8.5V5.5H7ZM4 4H5.5V5.5H4ZM7 7H8.5V8.5H7ZM4 7H5.5V8.5H4ZM1 7H2.5V8.5H1Z" fill="#b8b8b8"/></svg>
</body></html>
